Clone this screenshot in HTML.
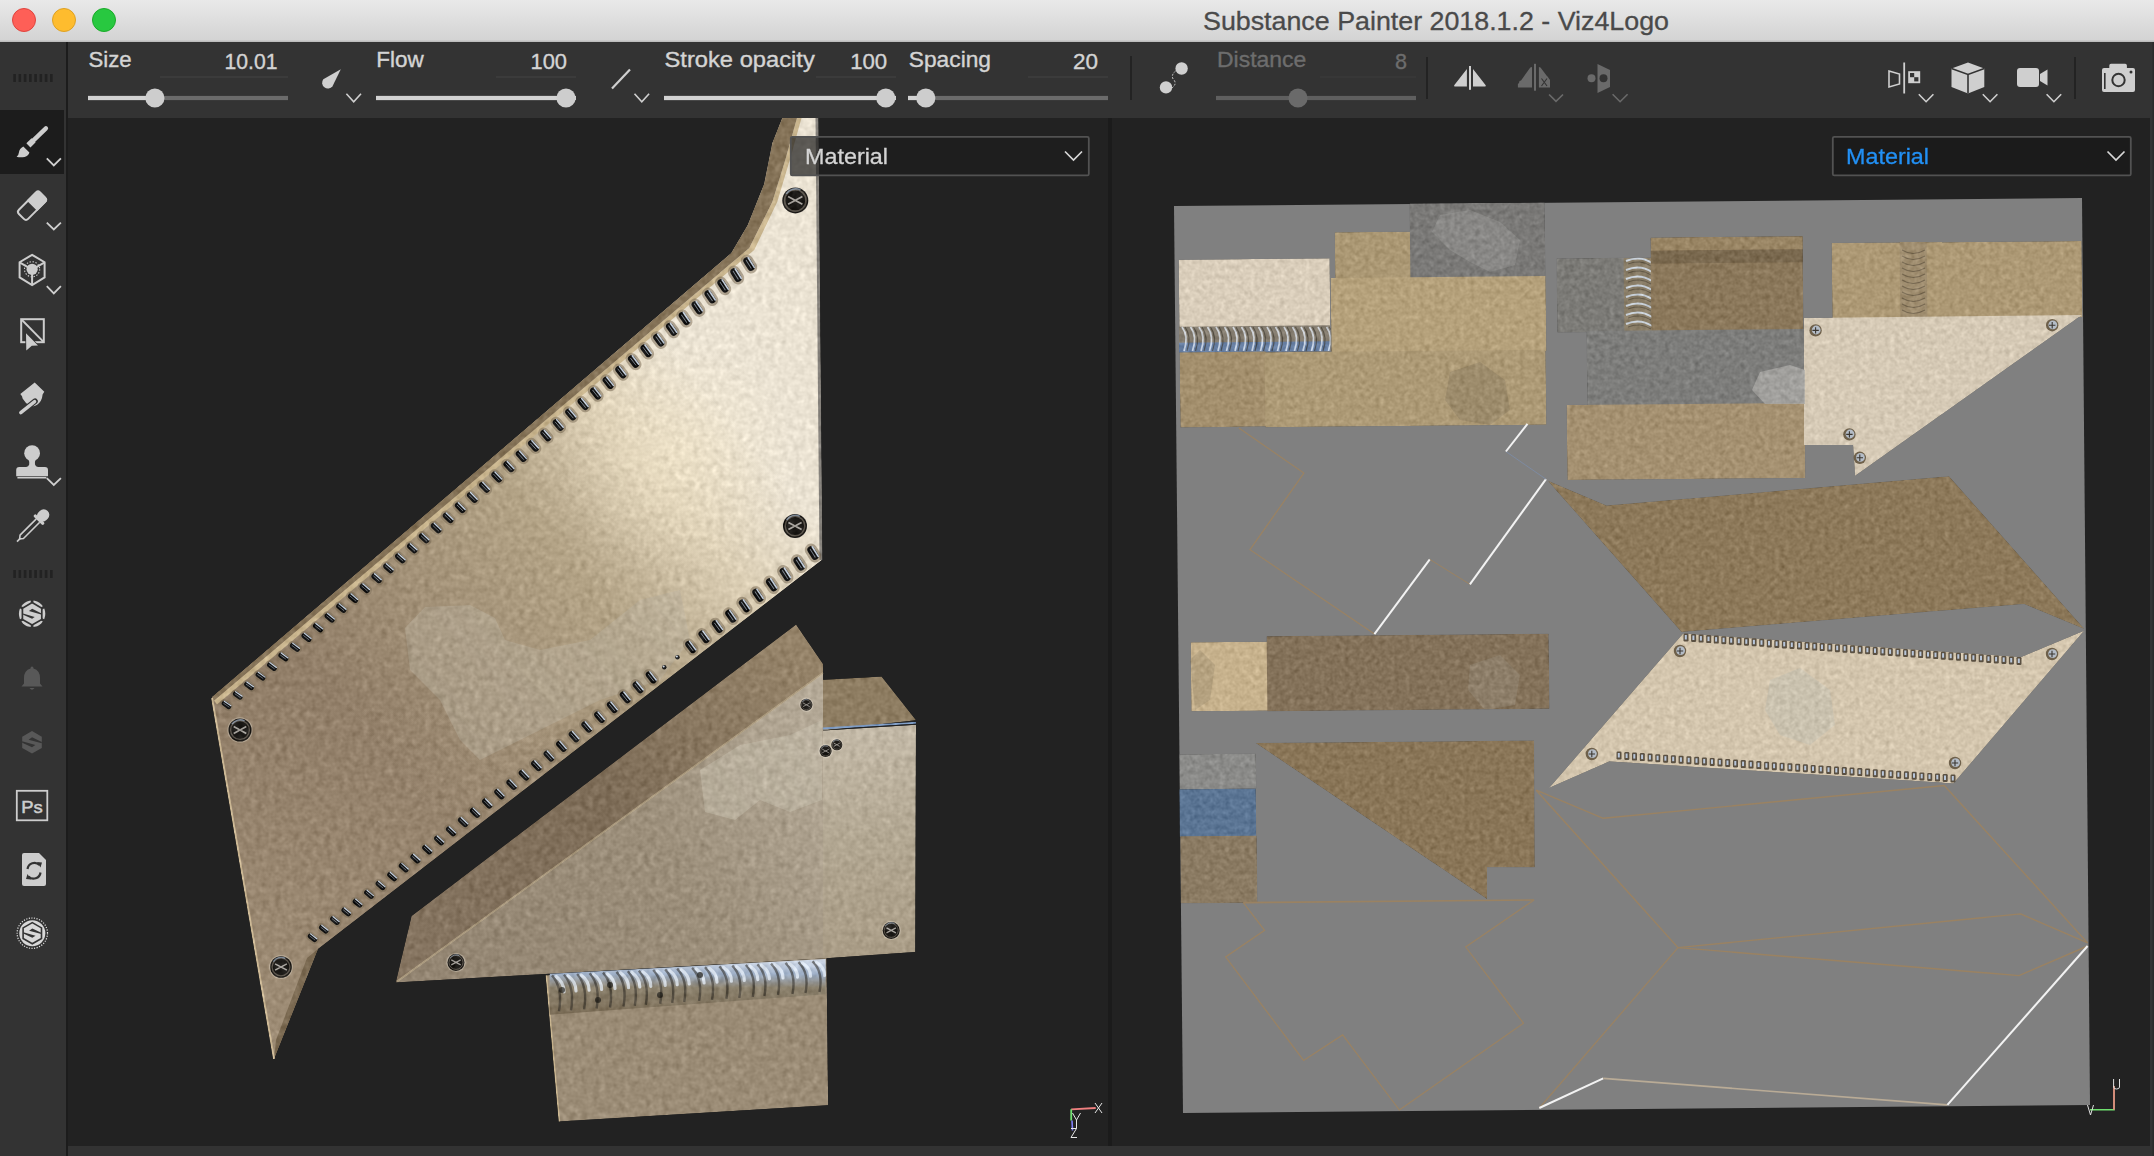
<!DOCTYPE html>
<html><head><meta charset="utf-8"><style>
html,body{margin:0;padding:0;width:2154px;height:1156px;overflow:hidden;background:#333;}
svg{display:block;font-family:"Liberation Sans", sans-serif;}
</style></head><body>
<svg width="2154" height="1156" viewBox="0 0 2154 1156">
<rect x="0" y="0" width="2154" height="1156" fill="#333333"/>
<defs><linearGradient id="tb" x1="0" y1="0" x2="0" y2="1"><stop offset="0" stop-color="#e9e9e9"/><stop offset="1" stop-color="#d3d3d3"/></linearGradient></defs>
<rect x="0" y="0" width="2154" height="41" fill="url(#tb)"/>
<rect x="0" y="40.5" width="2154" height="1.5" fill="#bdbdbd"/>
<circle cx="24" cy="20" r="11.5" fill="#fe5f57" stroke="#e0443e" stroke-width="1"/>
<circle cx="64" cy="20" r="11.5" fill="#febc2e" stroke="#dea123" stroke-width="1"/>
<circle cx="104" cy="20" r="11.5" fill="#28c840" stroke="#1aab29" stroke-width="1"/>
<text x="1203" y="30" font-size="26" fill="#4a4a4a" stroke="#4a4a4a" stroke-width="0.3" opacity="0.999" text-anchor="start" font-weight="normal" textLength="466" lengthAdjust="spacingAndGlyphs" >Substance Painter 2018.1.2 - Viz4Logo</text>
<rect x="0" y="42" width="2154" height="76" fill="#333333"/>
<rect x="0" y="118" width="66" height="1038" fill="#333333"/>
<rect x="66" y="42" width="2" height="1114" fill="#1c1c1c"/>
<rect x="0" y="110" width="64" height="64" fill="#1c1c1c"/>
<rect x="68" y="118" width="1040" height="1028" fill="#222222"/>
<rect x="1108" y="118" width="4" height="1028" fill="#1b1b1b"/>
<rect x="1112" y="118" width="1038" height="1028" fill="#222222"/>
<rect x="68" y="1146" width="2086" height="10" fill="#333333"/>
<rect x="2150" y="118" width="2.5" height="1038" fill="#333333"/><rect x="2152.5" y="42" width="1.5" height="1114" fill="#2a2a2a"/>
<rect x="13.30" y="74" width="2.6" height="8" fill="#222222"/>
<rect x="18.55" y="74" width="2.6" height="8" fill="#222222"/>
<rect x="23.80" y="74" width="2.6" height="8" fill="#222222"/>
<rect x="29.05" y="74" width="2.6" height="8" fill="#222222"/>
<rect x="34.30" y="74" width="2.6" height="8" fill="#222222"/>
<rect x="39.55" y="74" width="2.6" height="8" fill="#222222"/>
<rect x="44.80" y="74" width="2.6" height="8" fill="#222222"/>
<rect x="50.05" y="74" width="2.6" height="8" fill="#222222"/>
<text x="88.4" y="67.3" font-size="21.2" fill="#d4d4d4" stroke="#d4d4d4" stroke-width="0.35" text-anchor="start" opacity="0.999" textLength="43.2" lengthAdjust="spacingAndGlyphs">Size</text>
<text x="224.5" y="69.2" font-size="21.2" fill="#d4d4d4" stroke="#d4d4d4" stroke-width="0.35" text-anchor="start" opacity="0.999" textLength="53" lengthAdjust="spacingAndGlyphs">10.01</text>
<rect x="160" y="76.3" width="128" height="1.4" fill="#3f3f3f"/>
<rect x="88" y="95.9" width="200" height="4.2" fill="#6b6b6b"/>
<rect x="88" y="95.9" width="66.9" height="4.2" fill="#d2d2d2"/>
<circle cx="154.9" cy="98" r="9.6" fill="#cdcdcd"/>
<path d="M340.8,69.2 L332.5,86.2 A5.6,5.6 0 1 1 323.3,79.2 Z" fill="#cfcfcf"/>
<polyline points="346.4,93.8 353.7,101.8 361.0,93.8" fill="none" stroke="#cfcfcf" stroke-width="1.6" stroke-linejoin="miter"/>
<text x="376.3" y="67.3" font-size="21.2" fill="#d4d4d4" stroke="#d4d4d4" stroke-width="0.35" text-anchor="start" opacity="0.999" textLength="47.4" lengthAdjust="spacingAndGlyphs">Flow</text>
<text x="530.5" y="69.2" font-size="21.2" fill="#d4d4d4" stroke="#d4d4d4" stroke-width="0.35" text-anchor="start" opacity="0.999" textLength="36.5" lengthAdjust="spacingAndGlyphs">100</text>
<rect x="496" y="76.3" width="80" height="1.4" fill="#3f3f3f"/>
<rect x="376" y="95.9" width="200" height="4.2" fill="#6b6b6b"/>
<rect x="376" y="95.9" width="200" height="4.2" fill="#d2d2d2"/>
<circle cx="566" cy="98" r="9.6" fill="#cdcdcd"/>
<line x1="612" y1="88.5" x2="630" y2="69.5" stroke="#cfcfcf" stroke-width="2.2"/>
<polyline points="634.5,93.8 641.8,101.8 649.1,93.8" fill="none" stroke="#cfcfcf" stroke-width="1.6" stroke-linejoin="miter"/>
<text x="664.5" y="67.3" font-size="21.2" fill="#d4d4d4" stroke="#d4d4d4" stroke-width="0.35" text-anchor="start" opacity="0.999" textLength="150.3" lengthAdjust="spacingAndGlyphs">Stroke opacity</text>
<text x="850.2" y="69.2" font-size="21.2" fill="#d4d4d4" stroke="#d4d4d4" stroke-width="0.35" text-anchor="start" opacity="0.999" textLength="37" lengthAdjust="spacingAndGlyphs">100</text>
<rect x="816" y="76.3" width="80" height="1.4" fill="#3f3f3f"/>
<rect x="664" y="95.9" width="232" height="4.2" fill="#6b6b6b"/>
<rect x="664" y="95.9" width="232" height="4.2" fill="#d2d2d2"/>
<circle cx="885.8" cy="98" r="9.6" fill="#cdcdcd"/>
<text x="908.8" y="67.3" font-size="21.2" fill="#d4d4d4" stroke="#d4d4d4" stroke-width="0.35" text-anchor="start" opacity="0.999" textLength="82.2" lengthAdjust="spacingAndGlyphs">Spacing</text>
<text x="1073" y="69.2" font-size="21.2" fill="#d4d4d4" stroke="#d4d4d4" stroke-width="0.35" text-anchor="start" opacity="0.999" textLength="25" lengthAdjust="spacingAndGlyphs">20</text>
<rect x="1028" y="76.3" width="80" height="1.4" fill="#3f3f3f"/>
<rect x="908" y="95.9" width="200" height="4.2" fill="#6b6b6b"/>
<rect x="908" y="95.9" width="17.799999999999955" height="4.2" fill="#d2d2d2"/>
<circle cx="925.8" cy="98" r="9.6" fill="#cdcdcd"/>
<rect x="1130" y="56" width="2" height="44" fill="#232323"/>
<circle cx="1166" cy="87.4" r="6.2" fill="#cfcfcf"/><circle cx="1181.6" cy="68.5" r="6.2" fill="#cfcfcf"/>
<path d="M1175.5,71 Q1170,76 1174,80 Q1177,84 1172,88" fill="none" stroke="#cfcfcf" stroke-width="1" stroke-dasharray="2,1.6"/>
<text x="1217" y="67.3" font-size="21.2" fill="#6d6d6d" stroke="#6d6d6d" stroke-width="0.35" text-anchor="start" opacity="0.999" textLength="89.3" lengthAdjust="spacingAndGlyphs">Distance</text>
<text x="1395" y="69.2" font-size="21.2" fill="#6d6d6d" stroke="#6d6d6d" stroke-width="0.35" text-anchor="start" opacity="0.999" textLength="12" lengthAdjust="spacingAndGlyphs">8</text>
<rect x="1320" y="76.3" width="96" height="1.4" fill="#3a3a3a"/>
<rect x="1216" y="95.9" width="200" height="4.2" fill="#5f5f5f"/>
<circle cx="1298" cy="98" r="9.6" fill="#6a6a6a"/>
<rect x="1426" y="57" width="2" height="42" fill="#232323"/>
<path d="M1466.9,69 L1466.9,86.6 L1455.5,86.6 Q1453.2,86.6 1454.6,84.8 Z M1473,69 L1473,86.6 L1484.4,86.6 Q1486.7,86.6 1485.3,84.8 Z" fill="#cfcfcf"/>
<rect x="1469" y="66" width="2" height="23.8" fill="#cfcfcf"/>
<path d="M1517.9,87.5 L1517.9,84 L1519,83 L1519.5,81 L1521,80.5 L1530.3,67.5 L1532,67 L1532,87.5 Z" fill="#6a6a6a"/>
<rect x="1534" y="63.8" width="2" height="26.9" fill="#6a6a6a"/>
<path d="M1538.9,67 L1540.5,67.5 L1546.5,75.5 L1547.5,76.5 L1550,80 L1550,87.5 L1538.9,87.5 Z" fill="#6a6a6a"/>
<path d="M1541.5,78.5 L1547,86 M1547,78.5 L1541.5,86" stroke="#333" stroke-width="1.1"/>
<polyline points="1549.1,94.5 1556.0,101.4 1563.0,94.5" fill="none" stroke="#6a6a6a" stroke-width="1.7" stroke-linejoin="miter"/>
<circle cx="1591.5" cy="78.2" r="4" fill="#6a6a6a"/>
<path d="M1597.5,64 L1610,70 L1610,87 L1597.5,93 Z" fill="#6a6a6a"/>
<circle cx="1603.5" cy="78.2" r="4" fill="#333"/>
<polyline points="1612.6,94.2 1620.1,101.7 1627.6,94.2" fill="none" stroke="#6a6a6a" stroke-width="1.6" stroke-linejoin="miter"/>
<path d="M1889,71 L1899.5,74 L1899.5,84 L1889,87 Z" fill="none" stroke="#cfcfcf" stroke-width="1.6"/>
<rect x="1903.3" y="62.5" width="1.8" height="31" fill="#cfcfcf"/>
<rect x="1908.2" y="71.2" width="12" height="12" fill="#cfcfcf"/>
<rect x="1910" y="73" width="4.2" height="4.2" fill="#333"/><rect x="1914.2" y="77.2" width="4.2" height="4.2" fill="#333"/>
<polyline points="1918.8,94.2 1926.1,101.7 1933.4,94.2" fill="none" stroke="#cfcfcf" stroke-width="1.6" stroke-linejoin="miter"/>
<path d="M1968,62.5 L1984.3,68.5 L1984.3,87 L1968,93.5 L1951.5,87 L1951.5,68.5 Z" fill="#cfcfcf"/>
<path d="M1951.5,68.5 L1968,74.5 L1984.3,68.5 M1968,74.5 L1968,93.5" fill="none" stroke="#333" stroke-width="1.6"/>
<polyline points="1982.8,94.2 1990.1,101.7 1997.4,94.2" fill="none" stroke="#cfcfcf" stroke-width="1.6" stroke-linejoin="miter"/>
<rect x="2017" y="68" width="22" height="19" rx="3" fill="#cfcfcf"/><path d="M2040,74 L2047.5,69.5 L2047.5,85.5 L2040,81 Z" fill="#cfcfcf"/>
<polyline points="2046.6,94.2 2053.9,101.7 2061.2,94.2" fill="none" stroke="#cfcfcf" stroke-width="1.6" stroke-linejoin="miter"/>
<rect x="2074" y="57" width="2" height="42" fill="#232323"/>
<path d="M2102,70 Q2102,68 2104,68 L2109.3,68 L2109.3,65.5 Q2109.3,63.8 2111,63.8 L2125.2,63.8 Q2126.9,63.8 2126.9,65.5 L2126.9,68 L2133,68 Q2135,68 2135,70 L2135,90 Q2135,92 2133,92 L2104,92 Q2102,92 2102,90 Z" fill="#cfcfcf"/>
<circle cx="2118.5" cy="80" r="7.2" fill="#333"/><circle cx="2118.5" cy="80" r="5.2" fill="#cfcfcf"/><circle cx="2131" cy="72" r="1.5" fill="#333"/>
<rect x="2104" y="73" width="1.6" height="16" fill="#333"/>
<line x1="45.9" y1="128.3" x2="33.2" y2="140.6" stroke="#cdcdcd" stroke-width="4.4" stroke-linecap="round"/>
<line x1="33.6" y1="140.2" x2="28.4" y2="145.4" stroke="#cdcdcd" stroke-width="5.8"/>
<path d="M23.3,146.4 L29.4,152.4 Q28.6,155.8 24.6,156.9 Q20,157.8 16.6,156.7 Q18.7,155.2 18.9,152.4 Q19.3,148.4 23.3,146.4 Z" fill="#cdcdcd"/>
<polyline points="46.8,158.3 53.8,165.5 60.9,158.3" fill="none" stroke="#cfcfcf" stroke-width="1.8" stroke-linejoin="miter"/>
<g transform="translate(32,205.8) rotate(-45)"><rect x="-15" y="-6.5" width="30" height="13" rx="3" fill="none" stroke="#cdcdcd" stroke-width="2"/><path d="M0,-7.5 L12,-7.5 Q16,-7.5 16,-3.5 L16,3.5 Q16,7.5 12,7.5 L0,7.5 Z" fill="#cdcdcd"/></g>
<polyline points="46.8,222.6 53.8,229.4 60.9,222.6" fill="none" stroke="#cfcfcf" stroke-width="1.8" stroke-linejoin="miter"/>
<path d="M32.1,254.8 L44.6,262.2 L44.6,277.4 L32.1,285 L19.6,277.4 L19.6,262.2 Z" fill="none" stroke="#cdcdcd" stroke-width="2"/>
<path d="M20,262.6 L32.1,269.5 L44.2,262.6 M32.1,269.5 L32.1,284.6" fill="none" stroke="#cdcdcd" stroke-width="2"/>
<circle cx="32.1" cy="269.3" r="7.6" fill="none" stroke="#cdcdcd" stroke-width="1.1" stroke-dasharray="1.4,1.6"/>
<circle cx="32.1" cy="269.3" r="5.6" fill="#cdcdcd"/>
<polyline points="46.8,286.2 53.8,293.4 60.9,286.2" fill="none" stroke="#cfcfcf" stroke-width="1.8" stroke-linejoin="miter"/>
<rect x="21.2" y="319.2" width="22.6" height="23" fill="none" stroke="#cdcdcd" stroke-width="2"/>
<line x1="21.5" y1="319.5" x2="43.5" y2="341.8" stroke="#cdcdcd" stroke-width="1.9"/>
<path d="M26,333.3 L38,345.5 L31.8,345.8 L26.3,350.6 Z" fill="#cdcdcd" stroke="#333" stroke-width="1.6" paint-order="stroke"/>
<path d="M34.7,382.4 L44.3,391.8 L42.6,394.6 Q42,401.5 37.2,404.8 Q33.8,407 31.2,405.6 L26.2,403.2 L22.6,398.6 L22,396.2 L20.3,394 Z" fill="#cdcdcd"/>
<line x1="35" y1="401.2" x2="21" y2="412.4" stroke="#333" stroke-width="5.6" stroke-linecap="round"/>
<line x1="34.6" y1="401.6" x2="20.8" y2="412.6" stroke="#cdcdcd" stroke-width="3.4" stroke-linecap="round"/>
<circle cx="32.1" cy="453.2" r="7.9" fill="#cdcdcd"/>
<path d="M28.6,459.5 L35.6,459.5 Q34.6,462 35,464.5 Q35.6,466.8 38,467 L45,467 Q48,467 48,470 L48,476.2 L16.2,476.2 L16.2,470 Q16.2,467 19.2,467 L26.2,467 Q28.6,466.8 29.2,464.5 Q29.6,462 28.6,459.5 Z" fill="#cdcdcd"/>
<rect x="17.4" y="476.9" width="29" height="1.6" fill="#cdcdcd"/>
<polyline points="46.8,478.2 53.8,485.0 60.9,478.2" fill="none" stroke="#cfcfcf" stroke-width="1.8" stroke-linejoin="miter"/>
<g transform="translate(41.2,517.4) rotate(45)"><rect x="-5.6" y="-9.2" width="11.2" height="13" rx="5.6" fill="#cdcdcd"/><rect x="-6.8" y="1.5" width="13.6" height="3.2" rx="1.4" fill="#cdcdcd"/></g>
<g transform="translate(41.2,517.4) rotate(45)"><path d="M-2.4,4.5 L-2.4,27.5 L0,30.5 L2.4,27.5 L2.4,4.5" fill="none" stroke="#cdcdcd" stroke-width="1.6" stroke-linejoin="round"/><line x1="0" y1="30" x2="0" y2="34.2" stroke="#cdcdcd" stroke-width="1.6"/></g>
<rect x="13.30" y="570" width="2.6" height="8" fill="#222222"/>
<rect x="18.55" y="570" width="2.6" height="8" fill="#222222"/>
<rect x="23.80" y="570" width="2.6" height="8" fill="#222222"/>
<rect x="29.05" y="570" width="2.6" height="8" fill="#222222"/>
<rect x="34.30" y="570" width="2.6" height="8" fill="#222222"/>
<rect x="39.55" y="570" width="2.6" height="8" fill="#222222"/>
<rect x="44.80" y="570" width="2.6" height="8" fill="#222222"/>
<rect x="50.05" y="570" width="2.6" height="8" fill="#222222"/>
<g transform="translate(32.1,613.8)"><circle r="13.2" fill="#cdcdcd"/><path d="M0,-11.2 L9.7,-5.6 L9.7,5.6 L0,11.2 L-9.7,5.6 L-9.7,-5.6 Z" fill="none" stroke="#333" stroke-width="1.7"/><path d="M0,-11 L0,-14 M9.5,-5.5 L12.2,-7 M9.5,5.5 L12.2,7 M0,11 L0,14 M-9.5,5.5 L-12.2,7 M-9.5,-5.5 L-12.2,-7" stroke="#333" stroke-width="2.6"/><path d="M-3.2,-2.8 L0.1,-5 L9,-0.6 L9,0.6 Z" fill="#333"/><path d="M-9,-0.2 L-9,1 L0,5 L2.6,3.2 Z" fill="#333"/></g>
<path d="M32,666.5 Q33.5,666.5 33.5,668.5 Q40,670.5 40,678 L40,683.5 L42.5,686.5 L21.5,686.5 L24,683.5 L24,678 Q24,670.5 30.5,668.5 Q30.5,666.5 32,666.5 Z" fill="#585858"/>
<path d="M29.5,688 Q32,691.5 34.5,688 Z" fill="#585858"/>
<g transform="translate(32,742.3)"><path d="M0,-11.3 L9.8,-5.65 L9.8,5.65 L0,11.3 L-9.8,5.65 L-9.8,-5.65 Z" fill="#585858"/><path d="M-3.4,-2.6 L0,-5 L9.8,-0.4 L9.8,1 Z" fill="#333"/><path d="M-9.8,-1 L-9.8,0.4 L0,5 L3.4,2.6 Z" fill="#333"/></g>
<rect x="16.8" y="790.8" width="30.5" height="29.5" fill="none" stroke="#cdcdcd" stroke-width="1.8"/>
<text x="21.3" y="813" font-size="17" fill="#cdcdcd" stroke="#cdcdcd" stroke-width="0.5" opacity="0.999" textLength="21.5" lengthAdjust="spacingAndGlyphs">Ps</text>
<path d="M22,855 Q22,853 24,853 L39,853 L46,860 L46,884 Q46,886 44,886 L24,886 Q22,886 22,884 Z" fill="#cdcdcd"/>
<path d="M27.5,869 A7,7 0 0 1 39.5,865" fill="none" stroke="#333" stroke-width="2.2"/>
<path d="M40.5,872.5 A7,7 0 0 1 28.5,876.5" fill="none" stroke="#333" stroke-width="2.2"/>
<path d="M37,862 L42,862.5 L40.5,867.5 Z M31,879.5 L26,879 L27.5,874 Z" fill="#333"/>
<circle cx="32.3" cy="933.2" r="15.2" fill="none" stroke="#e0e0e0" stroke-width="1.2" stroke-dasharray="1.2,1.4"/>
<circle cx="32.3" cy="933.2" r="13" fill="#d8d8d8"/>
<g transform="translate(32.3,933.2)"><path d="M0,-10.6 L9.2,-5.3 L9.2,5.3 L0,10.6 L-9.2,5.3 L-9.2,-5.3 Z" fill="none" stroke="#333" stroke-width="1.6"/><path d="M-3.2,-2.5 L0,-4.6 L9,-0.4 L9,0.9 Z" fill="#333"/><path d="M-9,-0.9 L-9,0.4 L0,4.6 L3.2,2.5 Z" fill="#333"/></g>
<polygon points="1174.0,206.0 2082.0,198.0 2090.0,1105.0 1183.0,1113.0" fill="#808080" />
<filter id="mottleUV" filterUnits="userSpaceOnUse" x="1112" y="118" width="1038" height="1028" color-interpolation-filters="sRGB"><feTurbulence type="fractalNoise" baseFrequency="0.2" numOctaves="2" seed="11" result="t"/><feColorMatrix in="t" type="matrix" values="0.33 0.33 0.33 0 0  0.33 0.33 0.33 0 0  0.33 0.33 0.33 0 0  0 0 0 0 1" result="g"/><feComposite in="SourceGraphic" in2="g" operator="arithmetic" k1="0" k2="1" k3="0.3" k4="-0.15" result="c"/><feComposite in="c" in2="SourceGraphic" operator="in"/></filter>
<g filter="url(#mottleUV)">
<polygon points="1178.7,259.7 1329.7,258.3 1330.3,326.3 1179.3,327.7" fill="#dacebb" />
<polygon points="1178.9,326.7 1329.9,325.3 1330.1,351.3 1179.1,352.7" fill="#857d70" />
<polygon points="1179.0,342.7 1330.0,341.3 1330.0,351.3 1179.0,352.7" fill="#5f80b0" opacity="0.8"/>
<path d="M1182,327 Q1189,336 1184,351" fill="none" stroke="#e6eef8" stroke-width="1.8" opacity="0.75"/>
<path d="M1185,327 Q1192,337 1187,351" fill="none" stroke="#3a352c" stroke-width="1.2" opacity="0.6"/>
<path d="M1190.5,327 Q1197.5,336 1192.5,351" fill="none" stroke="#e6eef8" stroke-width="1.8" opacity="0.75"/>
<path d="M1193.5,327 Q1200.5,337 1195.5,351" fill="none" stroke="#3a352c" stroke-width="1.2" opacity="0.6"/>
<path d="M1199.0,327 Q1206.0,336 1201.0,351" fill="none" stroke="#e6eef8" stroke-width="1.8" opacity="0.75"/>
<path d="M1202.0,327 Q1209.0,337 1204.0,351" fill="none" stroke="#3a352c" stroke-width="1.2" opacity="0.6"/>
<path d="M1207.5,327 Q1214.5,336 1209.5,351" fill="none" stroke="#e6eef8" stroke-width="1.8" opacity="0.75"/>
<path d="M1210.5,327 Q1217.5,337 1212.5,351" fill="none" stroke="#3a352c" stroke-width="1.2" opacity="0.6"/>
<path d="M1216.0,327 Q1223.0,336 1218.0,351" fill="none" stroke="#e6eef8" stroke-width="1.8" opacity="0.75"/>
<path d="M1219.0,327 Q1226.0,337 1221.0,351" fill="none" stroke="#3a352c" stroke-width="1.2" opacity="0.6"/>
<path d="M1224.5,327 Q1231.5,336 1226.5,351" fill="none" stroke="#e6eef8" stroke-width="1.8" opacity="0.75"/>
<path d="M1227.5,327 Q1234.5,337 1229.5,351" fill="none" stroke="#3a352c" stroke-width="1.2" opacity="0.6"/>
<path d="M1233.0,327 Q1240.0,336 1235.0,351" fill="none" stroke="#e6eef8" stroke-width="1.8" opacity="0.75"/>
<path d="M1236.0,327 Q1243.0,337 1238.0,351" fill="none" stroke="#3a352c" stroke-width="1.2" opacity="0.6"/>
<path d="M1241.5,327 Q1248.5,336 1243.5,351" fill="none" stroke="#e6eef8" stroke-width="1.8" opacity="0.75"/>
<path d="M1244.5,327 Q1251.5,337 1246.5,351" fill="none" stroke="#3a352c" stroke-width="1.2" opacity="0.6"/>
<path d="M1250.0,327 Q1257.0,336 1252.0,351" fill="none" stroke="#e6eef8" stroke-width="1.8" opacity="0.75"/>
<path d="M1253.0,327 Q1260.0,337 1255.0,351" fill="none" stroke="#3a352c" stroke-width="1.2" opacity="0.6"/>
<path d="M1258.5,327 Q1265.5,336 1260.5,351" fill="none" stroke="#e6eef8" stroke-width="1.8" opacity="0.75"/>
<path d="M1261.5,327 Q1268.5,337 1263.5,351" fill="none" stroke="#3a352c" stroke-width="1.2" opacity="0.6"/>
<path d="M1267.0,327 Q1274.0,336 1269.0,351" fill="none" stroke="#e6eef8" stroke-width="1.8" opacity="0.75"/>
<path d="M1270.0,327 Q1277.0,337 1272.0,351" fill="none" stroke="#3a352c" stroke-width="1.2" opacity="0.6"/>
<path d="M1275.5,327 Q1282.5,336 1277.5,351" fill="none" stroke="#e6eef8" stroke-width="1.8" opacity="0.75"/>
<path d="M1278.5,327 Q1285.5,337 1280.5,351" fill="none" stroke="#3a352c" stroke-width="1.2" opacity="0.6"/>
<path d="M1284.0,327 Q1291.0,336 1286.0,351" fill="none" stroke="#e6eef8" stroke-width="1.8" opacity="0.75"/>
<path d="M1287.0,327 Q1294.0,337 1289.0,351" fill="none" stroke="#3a352c" stroke-width="1.2" opacity="0.6"/>
<path d="M1292.5,327 Q1299.5,336 1294.5,351" fill="none" stroke="#e6eef8" stroke-width="1.8" opacity="0.75"/>
<path d="M1295.5,327 Q1302.5,337 1297.5,351" fill="none" stroke="#3a352c" stroke-width="1.2" opacity="0.6"/>
<path d="M1301.0,327 Q1308.0,336 1303.0,351" fill="none" stroke="#e6eef8" stroke-width="1.8" opacity="0.75"/>
<path d="M1304.0,327 Q1311.0,337 1306.0,351" fill="none" stroke="#3a352c" stroke-width="1.2" opacity="0.6"/>
<path d="M1309.5,327 Q1316.5,336 1311.5,351" fill="none" stroke="#e6eef8" stroke-width="1.8" opacity="0.75"/>
<path d="M1312.5,327 Q1319.5,337 1314.5,351" fill="none" stroke="#3a352c" stroke-width="1.2" opacity="0.6"/>
<path d="M1318.0,327 Q1325.0,336 1320.0,351" fill="none" stroke="#e6eef8" stroke-width="1.8" opacity="0.75"/>
<path d="M1321.0,327 Q1328.0,337 1323.0,351" fill="none" stroke="#3a352c" stroke-width="1.2" opacity="0.6"/>
<path d="M1326.5,327 Q1333.5,336 1328.5,351" fill="none" stroke="#e6eef8" stroke-width="1.8" opacity="0.75"/>
<path d="M1329.5,327 Q1336.5,337 1331.5,351" fill="none" stroke="#3a352c" stroke-width="1.2" opacity="0.6"/>
<polygon points="1334.8,232.3 1410.8,231.7 1411.2,278.7 1335.2,279.3" fill="#ab9874" />
<polygon points="1409.6,203.6 1544.6,202.4 1545.4,277.4 1410.4,278.6" fill="#7a7977" />
<polygon points="1330.6,277.9 1545.6,276.1 1546.4,351.1 1331.4,352.9" fill="#b5a17b" />
<polygon points="1179.6,352.4 1265.6,351.6 1266.4,426.6 1180.4,427.4" fill="#a38f6d" />
<polygon points="1264.6,352.2 1545.6,349.8 1546.4,424.8 1265.4,427.2" fill="#ad9a76" />
<polygon points="1556.6,258.4 1651.6,257.6 1652.4,331.6 1557.4,332.4" fill="#7c7b77" />
<polygon points="1623.6,258.1 1651.6,257.9 1652.4,331.9 1624.4,332.1" fill="#8a7e68" />
<path d="M1626,261 Q1640,255 1652,263" fill="none" stroke="#d8e6f6" stroke-width="2" opacity="0.8"/>
<path d="M1628,264 Q1640,259 1651,266" fill="none" stroke="#4a4236" stroke-width="1" opacity="0.6"/>
<path d="M1626,270 Q1640,264 1652,272" fill="none" stroke="#d8e6f6" stroke-width="2" opacity="0.8"/>
<path d="M1628,273 Q1640,268 1651,275" fill="none" stroke="#4a4236" stroke-width="1" opacity="0.6"/>
<path d="M1626,279 Q1640,273 1652,281" fill="none" stroke="#d8e6f6" stroke-width="2" opacity="0.8"/>
<path d="M1628,282 Q1640,277 1651,284" fill="none" stroke="#4a4236" stroke-width="1" opacity="0.6"/>
<path d="M1626,288 Q1640,282 1652,290" fill="none" stroke="#d8e6f6" stroke-width="2" opacity="0.8"/>
<path d="M1628,291 Q1640,286 1651,293" fill="none" stroke="#4a4236" stroke-width="1" opacity="0.6"/>
<path d="M1626,297 Q1640,291 1652,299" fill="none" stroke="#d8e6f6" stroke-width="2" opacity="0.8"/>
<path d="M1628,300 Q1640,295 1651,302" fill="none" stroke="#4a4236" stroke-width="1" opacity="0.6"/>
<path d="M1626,306 Q1640,300 1652,308" fill="none" stroke="#d8e6f6" stroke-width="2" opacity="0.8"/>
<path d="M1628,309 Q1640,304 1651,311" fill="none" stroke="#4a4236" stroke-width="1" opacity="0.6"/>
<path d="M1626,315 Q1640,309 1652,317" fill="none" stroke="#d8e6f6" stroke-width="2" opacity="0.8"/>
<path d="M1628,318 Q1640,313 1651,320" fill="none" stroke="#4a4236" stroke-width="1" opacity="0.6"/>
<path d="M1626,324 Q1640,318 1652,326" fill="none" stroke="#d8e6f6" stroke-width="2" opacity="0.8"/>
<path d="M1628,327 Q1640,322 1651,329" fill="none" stroke="#4a4236" stroke-width="1" opacity="0.6"/>
<polygon points="1650.5,237.7 1802.5,236.3 1803.5,330.3 1651.5,331.7" fill="#8b785b" />
<polygon points="1650.9,237.7 1802.9,236.3 1803.1,249.3 1651.1,250.7" fill="#a08a68" opacity="0.7"/>
<polygon points="1650.9,250.7 1802.9,249.3 1803.1,262.3 1651.1,263.7" fill="#6e5c45" opacity="0.55"/>
<polygon points="1586.6,331.0 1804.6,329.0 1805.4,404.0 1587.4,406.0" fill="#7d7d7b" />
<polygon points="1566.6,405.0 1804.6,403.0 1805.4,478.0 1567.4,480.0" fill="#a59171" />
<polygon points="1831.6,243.1 2081.6,240.9 2082.4,316.9 1832.4,319.1" fill="#ad9975" />
<polygon points="1899.6,242.1 1926.6,241.9 1927.4,317.9 1900.4,318.1" fill="#a08e70" />
<path d="M1902,250 Q1913,257 1925,250" fill="none" stroke="#5a4e3c" stroke-width="1.1" opacity="0.6"/>
<path d="M1902,256 Q1913,263 1925,256" fill="none" stroke="#5a4e3c" stroke-width="1.1" opacity="0.6"/>
<path d="M1902,262 Q1913,269 1925,262" fill="none" stroke="#5a4e3c" stroke-width="1.1" opacity="0.6"/>
<path d="M1902,268 Q1913,275 1925,268" fill="none" stroke="#5a4e3c" stroke-width="1.1" opacity="0.6"/>
<path d="M1902,274 Q1913,281 1925,274" fill="none" stroke="#5a4e3c" stroke-width="1.1" opacity="0.6"/>
<path d="M1902,280 Q1913,287 1925,280" fill="none" stroke="#5a4e3c" stroke-width="1.1" opacity="0.6"/>
<path d="M1902,286 Q1913,293 1925,286" fill="none" stroke="#5a4e3c" stroke-width="1.1" opacity="0.6"/>
<path d="M1902,292 Q1913,299 1925,292" fill="none" stroke="#5a4e3c" stroke-width="1.1" opacity="0.6"/>
<path d="M1902,298 Q1913,305 1925,298" fill="none" stroke="#5a4e3c" stroke-width="1.1" opacity="0.6"/>
<path d="M1902,304 Q1913,311 1925,304" fill="none" stroke="#5a4e3c" stroke-width="1.1" opacity="0.6"/>
<path d="M1902,310 Q1913,317 1925,310" fill="none" stroke="#5a4e3c" stroke-width="1.1" opacity="0.6"/>
<polygon points="1804.0,318.0 2082.0,315.0 1855.0,476.0 1853.0,445.0 1804.0,445.0" fill="#d6cab6" />
<polygon points="1547.6,480.6 1606.5,505.6 1949.0,476.2 2084.4,629.0 2024.0,604.0 1681.5,632.0" fill="#8d795a" />
<polygon points="1683.0,633.5 2021.0,657.0 2084.4,630.6 1953.5,783.5 1609.4,761.5 1549.0,788.0" fill="#d4c6ae" />
<polygon points="1190.7,642.3 1267.7,641.7 1268.3,710.7 1191.3,711.3" fill="#c7b28d" />
<polygon points="1266.6,636.2 1548.6,633.8 1549.4,708.8 1267.4,711.2" fill="#84725a" />
<polygon points="1179.3,754.3 1255.8,753.7 1256.2,788.7 1179.7,789.3" fill="#8b8b89" />
<polygon points="1179.3,789.3 1255.8,788.7 1256.2,836.7 1179.7,837.3" fill="#5b7594" />
<polygon points="1180.2,836.3 1256.7,835.7 1257.3,902.7 1180.8,903.3" fill="#8b7b63" />
<polygon points="1255.7,743.0 1534.0,740.6 1534.8,867.2 1487.0,867.2 1487.0,899.0" fill="#8a7658" />
<polygon points="1440.0,215.0 1470.0,210.0 1500.0,222.0 1520.0,240.0 1515.0,265.0 1490.0,272.0 1470.0,262.0 1450.0,250.0 1432.0,232.0" fill="#9c9c98" opacity="0.45"/>
<polygon points="1450.0,372.0 1480.0,362.0 1505.0,380.0 1510.0,410.0 1490.0,425.0 1460.0,420.0 1445.0,400.0" fill="#8e7e62" opacity="0.5"/>
<polygon points="1760.0,372.0 1790.0,365.0 1805.0,370.0 1805.0,404.0 1765.0,404.0 1752.0,390.0" fill="#aaa9a6" opacity="0.8"/>
<polygon points="1770.0,680.0 1800.0,668.0 1830.0,690.0 1835.0,725.0 1810.0,745.0 1780.0,735.0 1765.0,710.0" fill="#bcbcb2" opacity="0.4"/>
<polygon points="1470.0,665.0 1500.0,655.0 1520.0,675.0 1515.0,705.0 1485.0,710.0 1468.0,690.0" fill="#9a9080" opacity="0.4"/>
<polygon points="1190.0,660.0 1200.0,650.0 1215.0,665.0 1210.0,700.0 1195.0,710.0" fill="#a89878" opacity="0.6"/>
</g>
<rect x="1683.5" y="633.5" width="5" height="8" rx="1.2" fill="#5a5042"/><rect x="1684.8" y="635.0" width="2" height="4.5" fill="#b8c6da"/><rect x="1691.1" y="634.0" width="5" height="8" rx="1.2" fill="#5a5042"/><rect x="1692.4" y="635.5" width="2" height="4.5" fill="#b8c6da"/><rect x="1698.6" y="634.6" width="5" height="8" rx="1.2" fill="#5a5042"/><rect x="1699.9" y="636.1" width="2" height="4.5" fill="#b8c6da"/><rect x="1706.2" y="635.1" width="5" height="8" rx="1.2" fill="#5a5042"/><rect x="1707.5" y="636.6" width="2" height="4.5" fill="#b8c6da"/><rect x="1713.8" y="635.6" width="5" height="8" rx="1.2" fill="#5a5042"/><rect x="1715.1" y="637.1" width="2" height="4.5" fill="#b8c6da"/><rect x="1721.3" y="636.2" width="5" height="8" rx="1.2" fill="#5a5042"/><rect x="1722.6" y="637.7" width="2" height="4.5" fill="#b8c6da"/><rect x="1728.9" y="636.7" width="5" height="8" rx="1.2" fill="#5a5042"/><rect x="1730.2" y="638.2" width="2" height="4.5" fill="#b8c6da"/><rect x="1736.5" y="637.2" width="5" height="8" rx="1.2" fill="#5a5042"/><rect x="1737.8" y="638.7" width="2" height="4.5" fill="#b8c6da"/><rect x="1744.0" y="637.8" width="5" height="8" rx="1.2" fill="#5a5042"/><rect x="1745.3" y="639.3" width="2" height="4.5" fill="#b8c6da"/><rect x="1751.6" y="638.3" width="5" height="8" rx="1.2" fill="#5a5042"/><rect x="1752.9" y="639.8" width="2" height="4.5" fill="#b8c6da"/><rect x="1759.2" y="638.8" width="5" height="8" rx="1.2" fill="#5a5042"/><rect x="1760.5" y="640.3" width="2" height="4.5" fill="#b8c6da"/><rect x="1766.8" y="639.4" width="5" height="8" rx="1.2" fill="#5a5042"/><rect x="1768.0" y="640.9" width="2" height="4.5" fill="#b8c6da"/><rect x="1774.3" y="639.9" width="5" height="8" rx="1.2" fill="#5a5042"/><rect x="1775.6" y="641.4" width="2" height="4.5" fill="#b8c6da"/><rect x="1781.9" y="640.4" width="5" height="8" rx="1.2" fill="#5a5042"/><rect x="1783.2" y="641.9" width="2" height="4.5" fill="#b8c6da"/><rect x="1789.5" y="641.0" width="5" height="8" rx="1.2" fill="#5a5042"/><rect x="1790.8" y="642.5" width="2" height="4.5" fill="#b8c6da"/><rect x="1797.0" y="641.5" width="5" height="8" rx="1.2" fill="#5a5042"/><rect x="1798.3" y="643.0" width="2" height="4.5" fill="#b8c6da"/><rect x="1804.6" y="642.0" width="5" height="8" rx="1.2" fill="#5a5042"/><rect x="1805.9" y="643.5" width="2" height="4.5" fill="#b8c6da"/><rect x="1812.2" y="642.6" width="5" height="8" rx="1.2" fill="#5a5042"/><rect x="1813.5" y="644.1" width="2" height="4.5" fill="#b8c6da"/><rect x="1819.7" y="643.1" width="5" height="8" rx="1.2" fill="#5a5042"/><rect x="1821.0" y="644.6" width="2" height="4.5" fill="#b8c6da"/><rect x="1827.3" y="643.6" width="5" height="8" rx="1.2" fill="#5a5042"/><rect x="1828.6" y="645.1" width="2" height="4.5" fill="#b8c6da"/><rect x="1834.9" y="644.2" width="5" height="8" rx="1.2" fill="#5a5042"/><rect x="1836.2" y="645.7" width="2" height="4.5" fill="#b8c6da"/><rect x="1842.4" y="644.7" width="5" height="8" rx="1.2" fill="#5a5042"/><rect x="1843.7" y="646.2" width="2" height="4.5" fill="#b8c6da"/><rect x="1850.0" y="645.2" width="5" height="8" rx="1.2" fill="#5a5042"/><rect x="1851.3" y="646.8" width="2" height="4.5" fill="#b8c6da"/><rect x="1857.6" y="645.8" width="5" height="8" rx="1.2" fill="#5a5042"/><rect x="1858.9" y="647.3" width="2" height="4.5" fill="#b8c6da"/><rect x="1865.1" y="646.3" width="5" height="8" rx="1.2" fill="#5a5042"/><rect x="1866.4" y="647.8" width="2" height="4.5" fill="#b8c6da"/><rect x="1872.7" y="646.9" width="5" height="8" rx="1.2" fill="#5a5042"/><rect x="1874.0" y="648.4" width="2" height="4.5" fill="#b8c6da"/><rect x="1880.3" y="647.4" width="5" height="8" rx="1.2" fill="#5a5042"/><rect x="1881.6" y="648.9" width="2" height="4.5" fill="#b8c6da"/><rect x="1887.8" y="647.9" width="5" height="8" rx="1.2" fill="#5a5042"/><rect x="1889.1" y="649.4" width="2" height="4.5" fill="#b8c6da"/><rect x="1895.4" y="648.5" width="5" height="8" rx="1.2" fill="#5a5042"/><rect x="1896.7" y="650.0" width="2" height="4.5" fill="#b8c6da"/><rect x="1903.0" y="649.0" width="5" height="8" rx="1.2" fill="#5a5042"/><rect x="1904.3" y="650.5" width="2" height="4.5" fill="#b8c6da"/><rect x="1910.5" y="649.5" width="5" height="8" rx="1.2" fill="#5a5042"/><rect x="1911.8" y="651.0" width="2" height="4.5" fill="#b8c6da"/><rect x="1918.1" y="650.1" width="5" height="8" rx="1.2" fill="#5a5042"/><rect x="1919.4" y="651.6" width="2" height="4.5" fill="#b8c6da"/><rect x="1925.7" y="650.6" width="5" height="8" rx="1.2" fill="#5a5042"/><rect x="1927.0" y="652.1" width="2" height="4.5" fill="#b8c6da"/><rect x="1933.2" y="651.1" width="5" height="8" rx="1.2" fill="#5a5042"/><rect x="1934.5" y="652.6" width="2" height="4.5" fill="#b8c6da"/><rect x="1940.8" y="651.7" width="5" height="8" rx="1.2" fill="#5a5042"/><rect x="1942.1" y="653.2" width="2" height="4.5" fill="#b8c6da"/><rect x="1948.4" y="652.2" width="5" height="8" rx="1.2" fill="#5a5042"/><rect x="1949.7" y="653.7" width="2" height="4.5" fill="#b8c6da"/><rect x="1956.0" y="652.7" width="5" height="8" rx="1.2" fill="#5a5042"/><rect x="1957.3" y="654.2" width="2" height="4.5" fill="#b8c6da"/><rect x="1963.5" y="653.3" width="5" height="8" rx="1.2" fill="#5a5042"/><rect x="1964.8" y="654.8" width="2" height="4.5" fill="#b8c6da"/><rect x="1971.1" y="653.8" width="5" height="8" rx="1.2" fill="#5a5042"/><rect x="1972.4" y="655.3" width="2" height="4.5" fill="#b8c6da"/><rect x="1978.7" y="654.3" width="5" height="8" rx="1.2" fill="#5a5042"/><rect x="1980.0" y="655.8" width="2" height="4.5" fill="#b8c6da"/><rect x="1986.2" y="654.9" width="5" height="8" rx="1.2" fill="#5a5042"/><rect x="1987.5" y="656.4" width="2" height="4.5" fill="#b8c6da"/><rect x="1993.8" y="655.4" width="5" height="8" rx="1.2" fill="#5a5042"/><rect x="1995.1" y="656.9" width="2" height="4.5" fill="#b8c6da"/><rect x="2001.4" y="655.9" width="5" height="8" rx="1.2" fill="#5a5042"/><rect x="2002.7" y="657.4" width="2" height="4.5" fill="#b8c6da"/><rect x="2008.9" y="656.5" width="5" height="8" rx="1.2" fill="#5a5042"/><rect x="2010.2" y="658.0" width="2" height="4.5" fill="#b8c6da"/><rect x="2016.5" y="657.0" width="5" height="8" rx="1.2" fill="#5a5042"/><rect x="2017.8" y="658.5" width="2" height="4.5" fill="#b8c6da"/>
<rect x="1616.5" y="751.5" width="5" height="8" rx="1.2" fill="#5a5042"/><rect x="1617.8" y="753.0" width="2" height="4.5" fill="#b8c6da"/><rect x="1624.3" y="752.0" width="5" height="8" rx="1.2" fill="#5a5042"/><rect x="1625.6" y="753.5" width="2" height="4.5" fill="#b8c6da"/><rect x="1632.0" y="752.6" width="5" height="8" rx="1.2" fill="#5a5042"/><rect x="1633.3" y="754.1" width="2" height="4.5" fill="#b8c6da"/><rect x="1639.8" y="753.1" width="5" height="8" rx="1.2" fill="#5a5042"/><rect x="1641.1" y="754.6" width="2" height="4.5" fill="#b8c6da"/><rect x="1647.6" y="753.6" width="5" height="8" rx="1.2" fill="#5a5042"/><rect x="1648.9" y="755.1" width="2" height="4.5" fill="#b8c6da"/><rect x="1655.3" y="754.2" width="5" height="8" rx="1.2" fill="#5a5042"/><rect x="1656.6" y="755.7" width="2" height="4.5" fill="#b8c6da"/><rect x="1663.1" y="754.7" width="5" height="8" rx="1.2" fill="#5a5042"/><rect x="1664.4" y="756.2" width="2" height="4.5" fill="#b8c6da"/><rect x="1670.9" y="755.2" width="5" height="8" rx="1.2" fill="#5a5042"/><rect x="1672.2" y="756.7" width="2" height="4.5" fill="#b8c6da"/><rect x="1678.6" y="755.8" width="5" height="8" rx="1.2" fill="#5a5042"/><rect x="1679.9" y="757.3" width="2" height="4.5" fill="#b8c6da"/><rect x="1686.4" y="756.3" width="5" height="8" rx="1.2" fill="#5a5042"/><rect x="1687.7" y="757.8" width="2" height="4.5" fill="#b8c6da"/><rect x="1694.2" y="756.8" width="5" height="8" rx="1.2" fill="#5a5042"/><rect x="1695.5" y="758.3" width="2" height="4.5" fill="#b8c6da"/><rect x="1701.9" y="757.4" width="5" height="8" rx="1.2" fill="#5a5042"/><rect x="1703.2" y="758.9" width="2" height="4.5" fill="#b8c6da"/><rect x="1709.7" y="757.9" width="5" height="8" rx="1.2" fill="#5a5042"/><rect x="1711.0" y="759.4" width="2" height="4.5" fill="#b8c6da"/><rect x="1717.5" y="758.5" width="5" height="8" rx="1.2" fill="#5a5042"/><rect x="1718.8" y="760.0" width="2" height="4.5" fill="#b8c6da"/><rect x="1725.2" y="759.0" width="5" height="8" rx="1.2" fill="#5a5042"/><rect x="1726.5" y="760.5" width="2" height="4.5" fill="#b8c6da"/><rect x="1733.0" y="759.5" width="5" height="8" rx="1.2" fill="#5a5042"/><rect x="1734.3" y="761.0" width="2" height="4.5" fill="#b8c6da"/><rect x="1740.8" y="760.1" width="5" height="8" rx="1.2" fill="#5a5042"/><rect x="1742.1" y="761.6" width="2" height="4.5" fill="#b8c6da"/><rect x="1748.5" y="760.6" width="5" height="8" rx="1.2" fill="#5a5042"/><rect x="1749.8" y="762.1" width="2" height="4.5" fill="#b8c6da"/><rect x="1756.3" y="761.1" width="5" height="8" rx="1.2" fill="#5a5042"/><rect x="1757.6" y="762.6" width="2" height="4.5" fill="#b8c6da"/><rect x="1764.1" y="761.7" width="5" height="8" rx="1.2" fill="#5a5042"/><rect x="1765.4" y="763.2" width="2" height="4.5" fill="#b8c6da"/><rect x="1771.8" y="762.2" width="5" height="8" rx="1.2" fill="#5a5042"/><rect x="1773.1" y="763.7" width="2" height="4.5" fill="#b8c6da"/><rect x="1779.6" y="762.7" width="5" height="8" rx="1.2" fill="#5a5042"/><rect x="1780.9" y="764.2" width="2" height="4.5" fill="#b8c6da"/><rect x="1787.4" y="763.3" width="5" height="8" rx="1.2" fill="#5a5042"/><rect x="1788.7" y="764.8" width="2" height="4.5" fill="#b8c6da"/><rect x="1795.2" y="763.8" width="5" height="8" rx="1.2" fill="#5a5042"/><rect x="1796.5" y="765.3" width="2" height="4.5" fill="#b8c6da"/><rect x="1802.9" y="764.3" width="5" height="8" rx="1.2" fill="#5a5042"/><rect x="1804.2" y="765.8" width="2" height="4.5" fill="#b8c6da"/><rect x="1810.7" y="764.9" width="5" height="8" rx="1.2" fill="#5a5042"/><rect x="1812.0" y="766.4" width="2" height="4.5" fill="#b8c6da"/><rect x="1818.5" y="765.4" width="5" height="8" rx="1.2" fill="#5a5042"/><rect x="1819.8" y="766.9" width="2" height="4.5" fill="#b8c6da"/><rect x="1826.2" y="765.9" width="5" height="8" rx="1.2" fill="#5a5042"/><rect x="1827.5" y="767.4" width="2" height="4.5" fill="#b8c6da"/><rect x="1834.0" y="766.5" width="5" height="8" rx="1.2" fill="#5a5042"/><rect x="1835.3" y="768.0" width="2" height="4.5" fill="#b8c6da"/><rect x="1841.8" y="767.0" width="5" height="8" rx="1.2" fill="#5a5042"/><rect x="1843.1" y="768.5" width="2" height="4.5" fill="#b8c6da"/><rect x="1849.5" y="767.5" width="5" height="8" rx="1.2" fill="#5a5042"/><rect x="1850.8" y="769.0" width="2" height="4.5" fill="#b8c6da"/><rect x="1857.3" y="768.1" width="5" height="8" rx="1.2" fill="#5a5042"/><rect x="1858.6" y="769.6" width="2" height="4.5" fill="#b8c6da"/><rect x="1865.1" y="768.6" width="5" height="8" rx="1.2" fill="#5a5042"/><rect x="1866.4" y="770.1" width="2" height="4.5" fill="#b8c6da"/><rect x="1872.8" y="769.2" width="5" height="8" rx="1.2" fill="#5a5042"/><rect x="1874.1" y="770.7" width="2" height="4.5" fill="#b8c6da"/><rect x="1880.6" y="769.7" width="5" height="8" rx="1.2" fill="#5a5042"/><rect x="1881.9" y="771.2" width="2" height="4.5" fill="#b8c6da"/><rect x="1888.4" y="770.2" width="5" height="8" rx="1.2" fill="#5a5042"/><rect x="1889.7" y="771.7" width="2" height="4.5" fill="#b8c6da"/><rect x="1896.1" y="770.8" width="5" height="8" rx="1.2" fill="#5a5042"/><rect x="1897.4" y="772.3" width="2" height="4.5" fill="#b8c6da"/><rect x="1903.9" y="771.3" width="5" height="8" rx="1.2" fill="#5a5042"/><rect x="1905.2" y="772.8" width="2" height="4.5" fill="#b8c6da"/><rect x="1911.7" y="771.8" width="5" height="8" rx="1.2" fill="#5a5042"/><rect x="1913.0" y="773.3" width="2" height="4.5" fill="#b8c6da"/><rect x="1919.4" y="772.4" width="5" height="8" rx="1.2" fill="#5a5042"/><rect x="1920.7" y="773.9" width="2" height="4.5" fill="#b8c6da"/><rect x="1927.2" y="772.9" width="5" height="8" rx="1.2" fill="#5a5042"/><rect x="1928.5" y="774.4" width="2" height="4.5" fill="#b8c6da"/><rect x="1935.0" y="773.4" width="5" height="8" rx="1.2" fill="#5a5042"/><rect x="1936.3" y="774.9" width="2" height="4.5" fill="#b8c6da"/><rect x="1942.7" y="774.0" width="5" height="8" rx="1.2" fill="#5a5042"/><rect x="1944.0" y="775.5" width="2" height="4.5" fill="#b8c6da"/><rect x="1950.5" y="774.5" width="5" height="8" rx="1.2" fill="#5a5042"/><rect x="1951.8" y="776.0" width="2" height="4.5" fill="#b8c6da"/>
<circle cx="1680" cy="651" r="6.2" fill="#6e604a"/><circle cx="1680.6" cy="650.6" r="4.4" fill="#b4bcc6"/><path d="M1676.8,651 L1683.2,651 M1680,647.8 L1680,654.2" stroke="#3a3630" stroke-width="1.1"/>
<circle cx="2052" cy="654" r="6.2" fill="#6e604a"/><circle cx="2052.6" cy="653.6" r="4.4" fill="#b4bcc6"/><path d="M2048.8,654 L2055.2,654 M2052,650.8 L2052,657.2" stroke="#3a3630" stroke-width="1.1"/>
<circle cx="1591.8" cy="754" r="6.2" fill="#6e604a"/><circle cx="1592.3999999999999" cy="753.6" r="4.4" fill="#b4bcc6"/><path d="M1588.6,754 L1595.0,754 M1591.8,750.8 L1591.8,757.2" stroke="#3a3630" stroke-width="1.1"/>
<circle cx="1955" cy="763" r="6.2" fill="#6e604a"/><circle cx="1955.6" cy="762.6" r="4.4" fill="#b4bcc6"/><path d="M1951.8,763 L1958.2,763 M1955,759.8 L1955,766.2" stroke="#3a3630" stroke-width="1.1"/>
<circle cx="1815.6" cy="330.4" r="6.2" fill="#6e604a"/><circle cx="1816.1999999999998" cy="330.0" r="4.4" fill="#b4bcc6"/><path d="M1812.3999999999999,330.4 L1818.8,330.4 M1815.6,327.2 L1815.6,333.59999999999997" stroke="#3a3630" stroke-width="1.1"/>
<circle cx="2052.2" cy="325.2" r="6.2" fill="#6e604a"/><circle cx="2052.7999999999997" cy="324.8" r="4.4" fill="#b4bcc6"/><path d="M2049.0,325.2 L2055.3999999999996,325.2 M2052.2,322.0 L2052.2,328.4" stroke="#3a3630" stroke-width="1.1"/>
<circle cx="1849.4" cy="434.4" r="6.2" fill="#6e604a"/><circle cx="1850.0" cy="434.0" r="4.4" fill="#b4bcc6"/><path d="M1846.2,434.4 L1852.6000000000001,434.4 M1849.4,431.2 L1849.4,437.59999999999997" stroke="#3a3630" stroke-width="1.1"/>
<circle cx="1859.8" cy="457.8" r="6.2" fill="#6e604a"/><circle cx="1860.3999999999999" cy="457.40000000000003" r="4.4" fill="#b4bcc6"/><path d="M1856.6,457.8 L1863.0,457.8 M1859.8,454.6 L1859.8,461.0" stroke="#3a3630" stroke-width="1.1"/>
<polyline points="1238.9,428.0 1303.9,473.1 1250.0,549.7 1374.4,634.1" fill="none" stroke="#9a8262" stroke-width="1.2" stroke-linejoin="miter"/>
<polyline points="1374.4,634.1 1429.8,559.4" fill="none" stroke="#f2f2f2" stroke-width="2.0" stroke-linejoin="miter"/>
<polyline points="1429.8,559.4 1469.9,584.3" fill="none" stroke="#9a8262" stroke-width="1.0" stroke-linejoin="miter"/>
<polyline points="1469.9,584.3 1546.0,479.2" fill="none" stroke="#f2f2f2" stroke-width="2.0" stroke-linejoin="miter"/>
<polyline points="1546.0,479.2 1505.9,451.5" fill="none" stroke="#7d8aa0" stroke-width="1.0" stroke-linejoin="miter"/>
<polyline points="1505.9,451.5 1527.5,423.8" fill="none" stroke="#f2f2f2" stroke-width="2.0" stroke-linejoin="miter"/>
<polyline points="1243.3,902.6 1534.0,900.0" fill="none" stroke="#9a8262" stroke-width="1.6" stroke-linejoin="miter"/>
<polyline points="1243.3,902.6 1264.6,930.3 1225.6,956.9 1303.6,1060.4 1342.6,1034.9 1399.4,1110.0 1523.5,1023.2 1465.7,947.0 1534.0,900.0" fill="none" stroke="#9a8262" stroke-width="1.2" stroke-linejoin="miter"/>
<polyline points="1536.2,790.2 1603.2,818.3 1944.3,785.6 2087.6,942.9" fill="none" stroke="#9a8262" stroke-width="1.4" stroke-linejoin="miter"/>
<polyline points="1536.2,790.2 1678.0,947.6 2020.6,913.9 2087.6,942.9" fill="none" stroke="#9a8262" stroke-width="1.4" stroke-linejoin="miter"/>
<polyline points="1678.0,947.6 2019.0,975.6 2087.6,946.0" fill="none" stroke="#9a8262" stroke-width="1.4" stroke-linejoin="miter"/>
<polyline points="1678.0,947.6 1539.3,1108.0" fill="none" stroke="#9a8262" stroke-width="1.2" stroke-linejoin="miter"/>
<polyline points="1539.3,1108.0 1603.2,1078.4" fill="none" stroke="#f2f2f2" stroke-width="2.0" stroke-linejoin="miter"/>
<polyline points="1603.2,1078.4 1947.4,1104.9" fill="none" stroke="#b9ab96" stroke-width="1.6" stroke-linejoin="miter"/>
<polyline points="1947.4,1104.9 2087.6,946.0" fill="none" stroke="#f2f2f2" stroke-width="2.0" stroke-linejoin="miter"/>
<polyline points="2090,1109.8 2114,1109.8 2114,1086" fill="none" stroke="#6fe06f" stroke-width="1.6"/>
<line x1="2114" y1="1109.8" x2="2114" y2="1086" stroke="#f08080" stroke-width="1.6"/>
<path d="M2113.6,1079 L2113.6,1087 Q2113.6,1089 2116.5,1089 Q2119.5,1089 2119.5,1087 L2119.5,1079" fill="none" stroke="#e0e0e0" stroke-width="1"/>
<path d="M2087.5,1105 L2090.5,1115 L2093.5,1105" fill="none" stroke="#e0e0e0" stroke-width="1"/>
<rect x="1832.8" y="136.8" width="298" height="38.6" rx="1.5" fill="#1b1b1b" stroke="#525252" stroke-width="1.8"/>
<text x="1846" y="164" font-size="22" fill="#2290f4" stroke="#2290f4" stroke-width="0.3" opacity="0.999" textLength="83" lengthAdjust="spacingAndGlyphs">Material</text>
<polyline points="2107.5,151.5 2116,160 2124.5,151.5" fill="none" stroke="#d8d8d8" stroke-width="1.7"/>
<defs><linearGradient id="plateG" gradientUnits="userSpaceOnUse" x1="700" y1="380" x2="330" y2="690"><stop offset="0" stop-color="#ebe3d3"/><stop offset="0.2" stop-color="#dccfb5"/><stop offset="0.45" stop-color="#b3a386"/><stop offset="1" stop-color="#927f69"/></linearGradient><linearGradient id="plateL" gradientUnits="userSpaceOnUse" x1="0" y1="700" x2="0" y2="1000"><stop offset="0" stop-color="#a89880" stop-opacity="0"/><stop offset="1" stop-color="#a89880" stop-opacity="0.5"/></linearGradient><radialGradient id="plateH" gradientUnits="userSpaceOnUse" cx="675" cy="455" r="120"><stop offset="0" stop-color="#f4e8cc" stop-opacity="0.55"/><stop offset="1" stop-color="#f4e8cc" stop-opacity="0"/></radialGradient><linearGradient id="slantG" gradientUnits="userSpaceOnUse" x1="420" y1="940" x2="800" y2="660"><stop offset="0" stop-color="#857460"/><stop offset="0.5" stop-color="#7e6d58"/><stop offset="1" stop-color="#958369"/></linearGradient><linearGradient id="frontG" gradientUnits="userSpaceOnUse" x1="420" y1="960" x2="820" y2="700"><stop offset="0" stop-color="#938572"/><stop offset="0.55" stop-color="#9c8f7b"/><stop offset="1" stop-color="#b6ab99"/></linearGradient><linearGradient id="weldG" gradientUnits="userSpaceOnUse" x1="0" y1="958" x2="0" y2="1012"><stop offset="0" stop-color="#d8e0ec"/><stop offset="0.3" stop-color="#9fb0c8"/><stop offset="0.55" stop-color="#8c826e"/><stop offset="1" stop-color="#7c6e58"/></linearGradient><linearGradient id="boxG" x1="0" y1="0" x2="0" y2="1"><stop offset="0" stop-color="#c4baa8"/><stop offset="0.5" stop-color="#b2a792"/><stop offset="1" stop-color="#a99c86"/></linearGradient></defs>
<filter id="mottle" filterUnits="userSpaceOnUse" x="68" y="118" width="1040" height="1028" color-interpolation-filters="sRGB"><feTurbulence type="fractalNoise" baseFrequency="0.16" numOctaves="2" seed="5" result="t"/><feColorMatrix in="t" type="matrix" values="0.33 0.33 0.33 0 0  0.33 0.33 0.33 0 0  0.33 0.33 0.33 0 0  0 0 0 0 1" result="g"/><feComposite in="SourceGraphic" in2="g" operator="arithmetic" k1="0" k2="1" k3="0.32" k4="-0.16" result="c"/><feComposite in="c" in2="SourceGraphic" operator="in"/></filter>
<g filter="url(#mottle)">
<polygon points="782.2,118.0 818.0,118.0 822.0,560.0 318.0,949.0 274.0,1059.0 212.0,697.0 731.2,253.0 747.7,225.0 764.1,184.0 772.3,142.9" fill="url(#plateG)"/>
<polygon points="782.2,118.0 818.0,118.0 822.0,560.0 318.0,949.0 274.0,1059.0 212.0,697.0 731.2,253.0 747.7,225.0 764.1,184.0 772.3,142.9" fill="url(#plateL)"/>
<polygon points="782.2,118.0 818.0,118.0 822.0,560.0 318.0,949.0 274.0,1059.0 212.0,697.0 731.2,253.0 747.7,225.0 764.1,184.0 772.3,142.9" fill="url(#plateH)"/>
<polygon points="405.0,628.0 425.0,607.0 470.0,605.0 495.0,618.0 505.0,640.0 540.0,650.0 590.0,640.0 640.0,600.0 680.0,590.0 690.0,640.0 660.0,680.0 600.0,700.0 560.0,720.0 520.0,740.0 480.0,760.0 460.0,740.0 440.0,700.0 410.0,670.0" fill="#b8b09e" opacity="0.45"/>
<polygon points="214.0,700.5 749.3,248.0 772.3,202.0 785.5,159.3 797.0,118.0 801.5,118.0 790.0,159.3 777.2,202.0 754.2,250.0 217.0,704.5" fill="#c9b58e"/>
<polygon points="212.0,697.0 731.2,253.0 747.7,225.0 764.1,184.0 772.3,142.9 782.2,118.0 797.0,118.0 785.5,159.3 772.3,202.0 749.3,248.0 214.0,700.5" fill="#857358"/>
<polygon points="318.0,949.0 274.0,1059.0 276.0,1040.0 307.0,958.0" fill="#7b6a52"/>
<polyline points="212.0,698.0 274.0,1059.0" stroke="#cdb996" stroke-width="2" fill="none"/>
<polyline points="817.0,118.0 821.0,560.0" stroke="#86827c" stroke-width="3" fill="none"/>
<g transform="translate(226.5,705.0) rotate(34.0) scale(0.85)"><rect x="-8.4" y="-5.2" width="16.8" height="10.4" rx="5.2" fill="#7c6e58" opacity="0.55"/><rect x="-6.2" y="-3.0" width="12.4" height="6.0" rx="3.0" fill="#131313"/><path d="M-4.7,-2.2 L4.7,-2.2" stroke="#c4cfdc" stroke-width="1.4" stroke-linecap="round"/><path d="M-4.2,0.3 L4.2,0.3" stroke="#9aa4b0" stroke-width="0.8" opacity="0.8"/></g>
<g transform="translate(237.8,695.5) rotate(34.5) scale(0.86)"><rect x="-8.4" y="-5.2" width="16.8" height="10.4" rx="5.2" fill="#7c6e58" opacity="0.55"/><rect x="-6.2" y="-3.0" width="12.4" height="6.0" rx="3.0" fill="#131313"/><path d="M-4.7,-2.2 L4.7,-2.2" stroke="#c4cfdc" stroke-width="1.4" stroke-linecap="round"/><path d="M-4.2,0.3 L4.2,0.3" stroke="#9aa4b0" stroke-width="0.8" opacity="0.8"/></g>
<g transform="translate(249.1,685.9) rotate(35.0) scale(0.87)"><rect x="-8.4" y="-5.2" width="16.8" height="10.4" rx="5.2" fill="#7c6e58" opacity="0.55"/><rect x="-6.2" y="-3.0" width="12.4" height="6.0" rx="3.0" fill="#131313"/><path d="M-4.7,-2.2 L4.7,-2.2" stroke="#c4cfdc" stroke-width="1.4" stroke-linecap="round"/><path d="M-4.2,0.3 L4.2,0.3" stroke="#9aa4b0" stroke-width="0.8" opacity="0.8"/></g>
<g transform="translate(260.5,676.3) rotate(35.6) scale(0.87)"><rect x="-8.4" y="-5.2" width="16.8" height="10.4" rx="5.2" fill="#7c6e58" opacity="0.55"/><rect x="-6.2" y="-3.0" width="12.4" height="6.0" rx="3.0" fill="#131313"/><path d="M-4.7,-2.2 L4.7,-2.2" stroke="#c4cfdc" stroke-width="1.4" stroke-linecap="round"/><path d="M-4.2,0.3 L4.2,0.3" stroke="#9aa4b0" stroke-width="0.8" opacity="0.8"/></g>
<g transform="translate(271.9,666.6) rotate(36.1) scale(0.88)"><rect x="-8.4" y="-5.2" width="16.8" height="10.4" rx="5.2" fill="#7c6e58" opacity="0.55"/><rect x="-6.2" y="-3.0" width="12.4" height="6.0" rx="3.0" fill="#131313"/><path d="M-4.7,-2.2 L4.7,-2.2" stroke="#c4cfdc" stroke-width="1.4" stroke-linecap="round"/><path d="M-4.2,0.3 L4.2,0.3" stroke="#9aa4b0" stroke-width="0.8" opacity="0.8"/></g>
<g transform="translate(283.4,657.0) rotate(36.6) scale(0.89)"><rect x="-8.4" y="-5.2" width="16.8" height="10.4" rx="5.2" fill="#7c6e58" opacity="0.55"/><rect x="-6.2" y="-3.0" width="12.4" height="6.0" rx="3.0" fill="#131313"/><path d="M-4.7,-2.2 L4.7,-2.2" stroke="#c4cfdc" stroke-width="1.4" stroke-linecap="round"/><path d="M-4.2,0.3 L4.2,0.3" stroke="#9aa4b0" stroke-width="0.8" opacity="0.8"/></g>
<g transform="translate(294.9,647.3) rotate(37.1) scale(0.90)"><rect x="-8.4" y="-5.2" width="16.8" height="10.4" rx="5.2" fill="#7c6e58" opacity="0.55"/><rect x="-6.2" y="-3.0" width="12.4" height="6.0" rx="3.0" fill="#131313"/><path d="M-4.7,-2.2 L4.7,-2.2" stroke="#c4cfdc" stroke-width="1.4" stroke-linecap="round"/><path d="M-4.2,0.3 L4.2,0.3" stroke="#9aa4b0" stroke-width="0.8" opacity="0.8"/></g>
<g transform="translate(306.5,637.5) rotate(37.7) scale(0.90)"><rect x="-8.4" y="-5.2" width="16.8" height="10.4" rx="5.2" fill="#7c6e58" opacity="0.55"/><rect x="-6.2" y="-3.0" width="12.4" height="6.0" rx="3.0" fill="#131313"/><path d="M-4.7,-2.2 L4.7,-2.2" stroke="#c4cfdc" stroke-width="1.4" stroke-linecap="round"/><path d="M-4.2,0.3 L4.2,0.3" stroke="#9aa4b0" stroke-width="0.8" opacity="0.8"/></g>
<g transform="translate(318.0,627.7) rotate(38.2) scale(0.91)"><rect x="-8.4" y="-5.2" width="16.8" height="10.4" rx="5.2" fill="#7c6e58" opacity="0.55"/><rect x="-6.2" y="-3.0" width="12.4" height="6.0" rx="3.0" fill="#131313"/><path d="M-4.7,-2.2 L4.7,-2.2" stroke="#c4cfdc" stroke-width="1.4" stroke-linecap="round"/><path d="M-4.2,0.3 L4.2,0.3" stroke="#9aa4b0" stroke-width="0.8" opacity="0.8"/></g>
<g transform="translate(329.7,617.9) rotate(38.7) scale(0.92)"><rect x="-8.4" y="-5.2" width="16.8" height="10.4" rx="5.2" fill="#7c6e58" opacity="0.55"/><rect x="-6.2" y="-3.0" width="12.4" height="6.0" rx="3.0" fill="#131313"/><path d="M-4.7,-2.2 L4.7,-2.2" stroke="#c4cfdc" stroke-width="1.4" stroke-linecap="round"/><path d="M-4.2,0.3 L4.2,0.3" stroke="#9aa4b0" stroke-width="0.8" opacity="0.8"/></g>
<g transform="translate(341.3,608.1) rotate(39.3) scale(0.93)"><rect x="-8.4" y="-5.2" width="16.8" height="10.4" rx="5.2" fill="#7c6e58" opacity="0.55"/><rect x="-6.2" y="-3.0" width="12.4" height="6.0" rx="3.0" fill="#131313"/><path d="M-4.7,-2.2 L4.7,-2.2" stroke="#c4cfdc" stroke-width="1.4" stroke-linecap="round"/><path d="M-4.2,0.3 L4.2,0.3" stroke="#9aa4b0" stroke-width="0.8" opacity="0.8"/></g>
<g transform="translate(353.0,598.2) rotate(39.8) scale(0.93)"><rect x="-8.4" y="-5.2" width="16.8" height="10.4" rx="5.2" fill="#7c6e58" opacity="0.55"/><rect x="-6.2" y="-3.0" width="12.4" height="6.0" rx="3.0" fill="#131313"/><path d="M-4.7,-2.2 L4.7,-2.2" stroke="#c4cfdc" stroke-width="1.4" stroke-linecap="round"/><path d="M-4.2,0.3 L4.2,0.3" stroke="#9aa4b0" stroke-width="0.8" opacity="0.8"/></g>
<g transform="translate(364.8,588.3) rotate(40.4) scale(0.94)"><rect x="-8.4" y="-5.2" width="16.8" height="10.4" rx="5.2" fill="#7c6e58" opacity="0.55"/><rect x="-6.2" y="-3.0" width="12.4" height="6.0" rx="3.0" fill="#131313"/><path d="M-4.7,-2.2 L4.7,-2.2" stroke="#c4cfdc" stroke-width="1.4" stroke-linecap="round"/><path d="M-4.2,0.3 L4.2,0.3" stroke="#9aa4b0" stroke-width="0.8" opacity="0.8"/></g>
<g transform="translate(376.6,578.3) rotate(40.9) scale(0.95)"><rect x="-8.4" y="-5.2" width="16.8" height="10.4" rx="5.2" fill="#7c6e58" opacity="0.55"/><rect x="-6.2" y="-3.0" width="12.4" height="6.0" rx="3.0" fill="#131313"/><path d="M-4.7,-2.2 L4.7,-2.2" stroke="#c4cfdc" stroke-width="1.4" stroke-linecap="round"/><path d="M-4.2,0.3 L4.2,0.3" stroke="#9aa4b0" stroke-width="0.8" opacity="0.8"/></g>
<g transform="translate(388.4,568.3) rotate(41.4) scale(0.96)"><rect x="-8.4" y="-5.2" width="16.8" height="10.4" rx="5.2" fill="#7c6e58" opacity="0.55"/><rect x="-6.2" y="-3.0" width="12.4" height="6.0" rx="3.0" fill="#131313"/><path d="M-4.7,-2.2 L4.7,-2.2" stroke="#c4cfdc" stroke-width="1.4" stroke-linecap="round"/><path d="M-4.2,0.3 L4.2,0.3" stroke="#9aa4b0" stroke-width="0.8" opacity="0.8"/></g>
<g transform="translate(400.3,558.3) rotate(42.0) scale(0.97)"><rect x="-8.4" y="-5.2" width="16.8" height="10.4" rx="5.2" fill="#7c6e58" opacity="0.55"/><rect x="-6.2" y="-3.0" width="12.4" height="6.0" rx="3.0" fill="#131313"/><path d="M-4.7,-2.2 L4.7,-2.2" stroke="#c4cfdc" stroke-width="1.4" stroke-linecap="round"/><path d="M-4.2,0.3 L4.2,0.3" stroke="#9aa4b0" stroke-width="0.8" opacity="0.8"/></g>
<g transform="translate(412.2,548.3) rotate(42.5) scale(0.97)"><rect x="-8.4" y="-5.2" width="16.8" height="10.4" rx="5.2" fill="#7c6e58" opacity="0.55"/><rect x="-6.2" y="-3.0" width="12.4" height="6.0" rx="3.0" fill="#131313"/><path d="M-4.7,-2.2 L4.7,-2.2" stroke="#c4cfdc" stroke-width="1.4" stroke-linecap="round"/><path d="M-4.2,0.3 L4.2,0.3" stroke="#9aa4b0" stroke-width="0.8" opacity="0.8"/></g>
<g transform="translate(424.1,538.2) rotate(43.1) scale(0.98)"><rect x="-8.4" y="-5.2" width="16.8" height="10.4" rx="5.2" fill="#7c6e58" opacity="0.55"/><rect x="-6.2" y="-3.0" width="12.4" height="6.0" rx="3.0" fill="#131313"/><path d="M-4.7,-2.2 L4.7,-2.2" stroke="#c4cfdc" stroke-width="1.4" stroke-linecap="round"/><path d="M-4.2,0.3 L4.2,0.3" stroke="#9aa4b0" stroke-width="0.8" opacity="0.8"/></g>
<g transform="translate(436.1,528.1) rotate(43.6) scale(0.99)"><rect x="-8.4" y="-5.2" width="16.8" height="10.4" rx="5.2" fill="#7c6e58" opacity="0.55"/><rect x="-6.2" y="-3.0" width="12.4" height="6.0" rx="3.0" fill="#131313"/><path d="M-4.7,-2.2 L4.7,-2.2" stroke="#c4cfdc" stroke-width="1.4" stroke-linecap="round"/><path d="M-4.2,0.3 L4.2,0.3" stroke="#9aa4b0" stroke-width="0.8" opacity="0.8"/></g>
<g transform="translate(448.1,517.9) rotate(44.2) scale(1.00)"><rect x="-8.4" y="-5.2" width="16.8" height="10.4" rx="5.2" fill="#7c6e58" opacity="0.55"/><rect x="-6.2" y="-3.0" width="12.4" height="6.0" rx="3.0" fill="#131313"/><path d="M-4.7,-2.2 L4.7,-2.2" stroke="#c4cfdc" stroke-width="1.4" stroke-linecap="round"/><path d="M-4.2,0.3 L4.2,0.3" stroke="#9aa4b0" stroke-width="0.8" opacity="0.8"/></g>
<g transform="translate(460.2,507.7) rotate(44.7) scale(1.01)"><rect x="-8.4" y="-5.2" width="16.8" height="10.4" rx="5.2" fill="#7c6e58" opacity="0.55"/><rect x="-6.2" y="-3.0" width="12.4" height="6.0" rx="3.0" fill="#131313"/><path d="M-4.7,-2.2 L4.7,-2.2" stroke="#c4cfdc" stroke-width="1.4" stroke-linecap="round"/><path d="M-4.2,0.3 L4.2,0.3" stroke="#9aa4b0" stroke-width="0.8" opacity="0.8"/></g>
<g transform="translate(472.3,497.5) rotate(45.3) scale(1.01)"><rect x="-8.4" y="-5.2" width="16.8" height="10.4" rx="5.2" fill="#7c6e58" opacity="0.55"/><rect x="-6.2" y="-3.0" width="12.4" height="6.0" rx="3.0" fill="#131313"/><path d="M-4.7,-2.2 L4.7,-2.2" stroke="#c4cfdc" stroke-width="1.4" stroke-linecap="round"/><path d="M-4.2,0.3 L4.2,0.3" stroke="#9aa4b0" stroke-width="0.8" opacity="0.8"/></g>
<g transform="translate(484.5,487.3) rotate(45.8) scale(1.02)"><rect x="-8.4" y="-5.2" width="16.8" height="10.4" rx="5.2" fill="#7c6e58" opacity="0.55"/><rect x="-6.2" y="-3.0" width="12.4" height="6.0" rx="3.0" fill="#131313"/><path d="M-4.7,-2.2 L4.7,-2.2" stroke="#c4cfdc" stroke-width="1.4" stroke-linecap="round"/><path d="M-4.2,0.3 L4.2,0.3" stroke="#9aa4b0" stroke-width="0.8" opacity="0.8"/></g>
<g transform="translate(496.7,477.0) rotate(46.4) scale(1.03)"><rect x="-8.4" y="-5.2" width="16.8" height="10.4" rx="5.2" fill="#7c6e58" opacity="0.55"/><rect x="-6.2" y="-3.0" width="12.4" height="6.0" rx="3.0" fill="#131313"/><path d="M-4.7,-2.2 L4.7,-2.2" stroke="#c4cfdc" stroke-width="1.4" stroke-linecap="round"/><path d="M-4.2,0.3 L4.2,0.3" stroke="#9aa4b0" stroke-width="0.8" opacity="0.8"/></g>
<g transform="translate(508.9,466.6) rotate(47.0) scale(1.04)"><rect x="-8.4" y="-5.2" width="16.8" height="10.4" rx="5.2" fill="#7c6e58" opacity="0.55"/><rect x="-6.2" y="-3.0" width="12.4" height="6.0" rx="3.0" fill="#131313"/><path d="M-4.7,-2.2 L4.7,-2.2" stroke="#c4cfdc" stroke-width="1.4" stroke-linecap="round"/><path d="M-4.2,0.3 L4.2,0.3" stroke="#9aa4b0" stroke-width="0.8" opacity="0.8"/></g>
<g transform="translate(521.2,456.3) rotate(47.5) scale(1.05)"><rect x="-8.4" y="-5.2" width="16.8" height="10.4" rx="5.2" fill="#7c6e58" opacity="0.55"/><rect x="-6.2" y="-3.0" width="12.4" height="6.0" rx="3.0" fill="#131313"/><path d="M-4.7,-2.2 L4.7,-2.2" stroke="#c4cfdc" stroke-width="1.4" stroke-linecap="round"/><path d="M-4.2,0.3 L4.2,0.3" stroke="#9aa4b0" stroke-width="0.8" opacity="0.8"/></g>
<g transform="translate(533.5,445.9) rotate(48.1) scale(1.06)"><rect x="-8.4" y="-5.2" width="16.8" height="10.4" rx="5.2" fill="#7c6e58" opacity="0.55"/><rect x="-6.2" y="-3.0" width="12.4" height="6.0" rx="3.0" fill="#131313"/><path d="M-4.7,-2.2 L4.7,-2.2" stroke="#c4cfdc" stroke-width="1.4" stroke-linecap="round"/><path d="M-4.2,0.3 L4.2,0.3" stroke="#9aa4b0" stroke-width="0.8" opacity="0.8"/></g>
<g transform="translate(545.8,435.5) rotate(48.7) scale(1.06)"><rect x="-8.4" y="-5.2" width="16.8" height="10.4" rx="5.2" fill="#7c6e58" opacity="0.55"/><rect x="-6.2" y="-3.0" width="12.4" height="6.0" rx="3.0" fill="#131313"/><path d="M-4.7,-2.2 L4.7,-2.2" stroke="#c4cfdc" stroke-width="1.4" stroke-linecap="round"/><path d="M-4.2,0.3 L4.2,0.3" stroke="#9aa4b0" stroke-width="0.8" opacity="0.8"/></g>
<g transform="translate(558.2,425.0) rotate(49.2) scale(1.07)"><rect x="-8.4" y="-5.2" width="16.8" height="10.4" rx="5.2" fill="#7c6e58" opacity="0.55"/><rect x="-6.2" y="-3.0" width="12.4" height="6.0" rx="3.0" fill="#131313"/><path d="M-4.7,-2.2 L4.7,-2.2" stroke="#c4cfdc" stroke-width="1.4" stroke-linecap="round"/><path d="M-4.2,0.3 L4.2,0.3" stroke="#9aa4b0" stroke-width="0.8" opacity="0.8"/></g>
<g transform="translate(570.7,414.5) rotate(49.8) scale(1.08)"><rect x="-8.4" y="-5.2" width="16.8" height="10.4" rx="5.2" fill="#7c6e58" opacity="0.55"/><rect x="-6.2" y="-3.0" width="12.4" height="6.0" rx="3.0" fill="#131313"/><path d="M-4.7,-2.2 L4.7,-2.2" stroke="#c4cfdc" stroke-width="1.4" stroke-linecap="round"/><path d="M-4.2,0.3 L4.2,0.3" stroke="#9aa4b0" stroke-width="0.8" opacity="0.8"/></g>
<g transform="translate(583.1,404.0) rotate(50.4) scale(1.09)"><rect x="-8.4" y="-5.2" width="16.8" height="10.4" rx="5.2" fill="#7c6e58" opacity="0.55"/><rect x="-6.2" y="-3.0" width="12.4" height="6.0" rx="3.0" fill="#131313"/><path d="M-4.7,-2.2 L4.7,-2.2" stroke="#c4cfdc" stroke-width="1.4" stroke-linecap="round"/><path d="M-4.2,0.3 L4.2,0.3" stroke="#9aa4b0" stroke-width="0.8" opacity="0.8"/></g>
<g transform="translate(595.7,393.4) rotate(51.0) scale(1.10)"><rect x="-8.4" y="-5.2" width="16.8" height="10.4" rx="5.2" fill="#7c6e58" opacity="0.55"/><rect x="-6.2" y="-3.0" width="12.4" height="6.0" rx="3.0" fill="#131313"/><path d="M-4.7,-2.2 L4.7,-2.2" stroke="#c4cfdc" stroke-width="1.4" stroke-linecap="round"/><path d="M-4.2,0.3 L4.2,0.3" stroke="#9aa4b0" stroke-width="0.8" opacity="0.8"/></g>
<g transform="translate(608.2,382.8) rotate(51.5) scale(1.11)"><rect x="-8.4" y="-5.2" width="16.8" height="10.4" rx="5.2" fill="#7c6e58" opacity="0.55"/><rect x="-6.2" y="-3.0" width="12.4" height="6.0" rx="3.0" fill="#131313"/><path d="M-4.7,-2.2 L4.7,-2.2" stroke="#c4cfdc" stroke-width="1.4" stroke-linecap="round"/><path d="M-4.2,0.3 L4.2,0.3" stroke="#9aa4b0" stroke-width="0.8" opacity="0.8"/></g>
<g transform="translate(620.8,372.2) rotate(52.1) scale(1.11)"><rect x="-8.4" y="-5.2" width="16.8" height="10.4" rx="5.2" fill="#7c6e58" opacity="0.55"/><rect x="-6.2" y="-3.0" width="12.4" height="6.0" rx="3.0" fill="#131313"/><path d="M-4.7,-2.2 L4.7,-2.2" stroke="#c4cfdc" stroke-width="1.4" stroke-linecap="round"/><path d="M-4.2,0.3 L4.2,0.3" stroke="#9aa4b0" stroke-width="0.8" opacity="0.8"/></g>
<g transform="translate(633.5,361.5) rotate(52.7) scale(1.12)"><rect x="-8.4" y="-5.2" width="16.8" height="10.4" rx="5.2" fill="#7c6e58" opacity="0.55"/><rect x="-6.2" y="-3.0" width="12.4" height="6.0" rx="3.0" fill="#131313"/><path d="M-4.7,-2.2 L4.7,-2.2" stroke="#c4cfdc" stroke-width="1.4" stroke-linecap="round"/><path d="M-4.2,0.3 L4.2,0.3" stroke="#9aa4b0" stroke-width="0.8" opacity="0.8"/></g>
<g transform="translate(646.1,350.8) rotate(53.3) scale(1.13)"><rect x="-8.4" y="-5.2" width="16.8" height="10.4" rx="5.2" fill="#7c6e58" opacity="0.55"/><rect x="-6.2" y="-3.0" width="12.4" height="6.0" rx="3.0" fill="#131313"/><path d="M-4.7,-2.2 L4.7,-2.2" stroke="#c4cfdc" stroke-width="1.4" stroke-linecap="round"/><path d="M-4.2,0.3 L4.2,0.3" stroke="#9aa4b0" stroke-width="0.8" opacity="0.8"/></g>
<g transform="translate(658.8,340.1) rotate(53.9) scale(1.14)"><rect x="-8.4" y="-5.2" width="16.8" height="10.4" rx="5.2" fill="#7c6e58" opacity="0.55"/><rect x="-6.2" y="-3.0" width="12.4" height="6.0" rx="3.0" fill="#131313"/><path d="M-4.7,-2.2 L4.7,-2.2" stroke="#c4cfdc" stroke-width="1.4" stroke-linecap="round"/><path d="M-4.2,0.3 L4.2,0.3" stroke="#9aa4b0" stroke-width="0.8" opacity="0.8"/></g>
<g transform="translate(671.6,329.3) rotate(54.4) scale(1.15)"><rect x="-8.4" y="-5.2" width="16.8" height="10.4" rx="5.2" fill="#7c6e58" opacity="0.55"/><rect x="-6.2" y="-3.0" width="12.4" height="6.0" rx="3.0" fill="#131313"/><path d="M-4.7,-2.2 L4.7,-2.2" stroke="#c4cfdc" stroke-width="1.4" stroke-linecap="round"/><path d="M-4.2,0.3 L4.2,0.3" stroke="#9aa4b0" stroke-width="0.8" opacity="0.8"/></g>
<g transform="translate(684.4,318.5) rotate(55.0) scale(1.16)"><rect x="-8.4" y="-5.2" width="16.8" height="10.4" rx="5.2" fill="#7c6e58" opacity="0.55"/><rect x="-6.2" y="-3.0" width="12.4" height="6.0" rx="3.0" fill="#131313"/><path d="M-4.7,-2.2 L4.7,-2.2" stroke="#c4cfdc" stroke-width="1.4" stroke-linecap="round"/><path d="M-4.2,0.3 L4.2,0.3" stroke="#9aa4b0" stroke-width="0.8" opacity="0.8"/></g>
<g transform="translate(697.2,307.7) rotate(55.6) scale(1.17)"><rect x="-8.4" y="-5.2" width="16.8" height="10.4" rx="5.2" fill="#7c6e58" opacity="0.55"/><rect x="-6.2" y="-3.0" width="12.4" height="6.0" rx="3.0" fill="#131313"/><path d="M-4.7,-2.2 L4.7,-2.2" stroke="#c4cfdc" stroke-width="1.4" stroke-linecap="round"/><path d="M-4.2,0.3 L4.2,0.3" stroke="#9aa4b0" stroke-width="0.8" opacity="0.8"/></g>
<g transform="translate(710.1,296.8) rotate(56.2) scale(1.17)"><rect x="-8.4" y="-5.2" width="16.8" height="10.4" rx="5.2" fill="#7c6e58" opacity="0.55"/><rect x="-6.2" y="-3.0" width="12.4" height="6.0" rx="3.0" fill="#131313"/><path d="M-4.7,-2.2 L4.7,-2.2" stroke="#c4cfdc" stroke-width="1.4" stroke-linecap="round"/><path d="M-4.2,0.3 L4.2,0.3" stroke="#9aa4b0" stroke-width="0.8" opacity="0.8"/></g>
<g transform="translate(723.0,285.9) rotate(56.8) scale(1.18)"><rect x="-8.4" y="-5.2" width="16.8" height="10.4" rx="5.2" fill="#7c6e58" opacity="0.55"/><rect x="-6.2" y="-3.0" width="12.4" height="6.0" rx="3.0" fill="#131313"/><path d="M-4.7,-2.2 L4.7,-2.2" stroke="#c4cfdc" stroke-width="1.4" stroke-linecap="round"/><path d="M-4.2,0.3 L4.2,0.3" stroke="#9aa4b0" stroke-width="0.8" opacity="0.8"/></g>
<g transform="translate(736.0,275.0) rotate(57.4) scale(1.19)"><rect x="-8.4" y="-5.2" width="16.8" height="10.4" rx="5.2" fill="#7c6e58" opacity="0.55"/><rect x="-6.2" y="-3.0" width="12.4" height="6.0" rx="3.0" fill="#131313"/><path d="M-4.7,-2.2 L4.7,-2.2" stroke="#c4cfdc" stroke-width="1.4" stroke-linecap="round"/><path d="M-4.2,0.3 L4.2,0.3" stroke="#9aa4b0" stroke-width="0.8" opacity="0.8"/></g>
<g transform="translate(749.0,264.0) rotate(58.0) scale(1.20)"><rect x="-8.4" y="-5.2" width="16.8" height="10.4" rx="5.2" fill="#7c6e58" opacity="0.55"/><rect x="-6.2" y="-3.0" width="12.4" height="6.0" rx="3.0" fill="#131313"/><path d="M-4.7,-2.2 L4.7,-2.2" stroke="#c4cfdc" stroke-width="1.4" stroke-linecap="round"/><path d="M-4.2,0.3 L4.2,0.3" stroke="#9aa4b0" stroke-width="0.8" opacity="0.8"/></g>
<g transform="translate(312.5,937.8) rotate(38.0) scale(0.85)"><rect x="-8.4" y="-5.2" width="16.8" height="10.4" rx="5.2" fill="#7c6e58" opacity="0.55"/><rect x="-6.2" y="-3.0" width="12.4" height="6.0" rx="3.0" fill="#131313"/><path d="M-4.7,-2.2 L4.7,-2.2" stroke="#c4cfdc" stroke-width="1.4" stroke-linecap="round"/><path d="M-4.2,0.3 L4.2,0.3" stroke="#9aa4b0" stroke-width="0.8" opacity="0.8"/></g>
<g transform="translate(323.7,929.2) rotate(38.4) scale(0.86)"><rect x="-8.4" y="-5.2" width="16.8" height="10.4" rx="5.2" fill="#7c6e58" opacity="0.55"/><rect x="-6.2" y="-3.0" width="12.4" height="6.0" rx="3.0" fill="#131313"/><path d="M-4.7,-2.2 L4.7,-2.2" stroke="#c4cfdc" stroke-width="1.4" stroke-linecap="round"/><path d="M-4.2,0.3 L4.2,0.3" stroke="#9aa4b0" stroke-width="0.8" opacity="0.8"/></g>
<g transform="translate(334.9,920.6) rotate(38.9) scale(0.87)"><rect x="-8.4" y="-5.2" width="16.8" height="10.4" rx="5.2" fill="#7c6e58" opacity="0.55"/><rect x="-6.2" y="-3.0" width="12.4" height="6.0" rx="3.0" fill="#131313"/><path d="M-4.7,-2.2 L4.7,-2.2" stroke="#c4cfdc" stroke-width="1.4" stroke-linecap="round"/><path d="M-4.2,0.3 L4.2,0.3" stroke="#9aa4b0" stroke-width="0.8" opacity="0.8"/></g>
<g transform="translate(346.2,911.9) rotate(39.3) scale(0.87)"><rect x="-8.4" y="-5.2" width="16.8" height="10.4" rx="5.2" fill="#7c6e58" opacity="0.55"/><rect x="-6.2" y="-3.0" width="12.4" height="6.0" rx="3.0" fill="#131313"/><path d="M-4.7,-2.2 L4.7,-2.2" stroke="#c4cfdc" stroke-width="1.4" stroke-linecap="round"/><path d="M-4.2,0.3 L4.2,0.3" stroke="#9aa4b0" stroke-width="0.8" opacity="0.8"/></g>
<g transform="translate(357.5,903.2) rotate(39.8) scale(0.88)"><rect x="-8.4" y="-5.2" width="16.8" height="10.4" rx="5.2" fill="#7c6e58" opacity="0.55"/><rect x="-6.2" y="-3.0" width="12.4" height="6.0" rx="3.0" fill="#131313"/><path d="M-4.7,-2.2 L4.7,-2.2" stroke="#c4cfdc" stroke-width="1.4" stroke-linecap="round"/><path d="M-4.2,0.3 L4.2,0.3" stroke="#9aa4b0" stroke-width="0.8" opacity="0.8"/></g>
<g transform="translate(369.0,894.4) rotate(40.3) scale(0.89)"><rect x="-8.4" y="-5.2" width="16.8" height="10.4" rx="5.2" fill="#7c6e58" opacity="0.55"/><rect x="-6.2" y="-3.0" width="12.4" height="6.0" rx="3.0" fill="#131313"/><path d="M-4.7,-2.2 L4.7,-2.2" stroke="#c4cfdc" stroke-width="1.4" stroke-linecap="round"/><path d="M-4.2,0.3 L4.2,0.3" stroke="#9aa4b0" stroke-width="0.8" opacity="0.8"/></g>
<g transform="translate(380.5,885.5) rotate(40.7) scale(0.90)"><rect x="-8.4" y="-5.2" width="16.8" height="10.4" rx="5.2" fill="#7c6e58" opacity="0.55"/><rect x="-6.2" y="-3.0" width="12.4" height="6.0" rx="3.0" fill="#131313"/><path d="M-4.7,-2.2 L4.7,-2.2" stroke="#c4cfdc" stroke-width="1.4" stroke-linecap="round"/><path d="M-4.2,0.3 L4.2,0.3" stroke="#9aa4b0" stroke-width="0.8" opacity="0.8"/></g>
<g transform="translate(392.1,876.6) rotate(41.2) scale(0.91)"><rect x="-8.4" y="-5.2" width="16.8" height="10.4" rx="5.2" fill="#7c6e58" opacity="0.55"/><rect x="-6.2" y="-3.0" width="12.4" height="6.0" rx="3.0" fill="#131313"/><path d="M-4.7,-2.2 L4.7,-2.2" stroke="#c4cfdc" stroke-width="1.4" stroke-linecap="round"/><path d="M-4.2,0.3 L4.2,0.3" stroke="#9aa4b0" stroke-width="0.8" opacity="0.8"/></g>
<g transform="translate(403.7,867.7) rotate(41.6) scale(0.91)"><rect x="-8.4" y="-5.2" width="16.8" height="10.4" rx="5.2" fill="#7c6e58" opacity="0.55"/><rect x="-6.2" y="-3.0" width="12.4" height="6.0" rx="3.0" fill="#131313"/><path d="M-4.7,-2.2 L4.7,-2.2" stroke="#c4cfdc" stroke-width="1.4" stroke-linecap="round"/><path d="M-4.2,0.3 L4.2,0.3" stroke="#9aa4b0" stroke-width="0.8" opacity="0.8"/></g>
<g transform="translate(415.4,858.7) rotate(42.1) scale(0.92)"><rect x="-8.4" y="-5.2" width="16.8" height="10.4" rx="5.2" fill="#7c6e58" opacity="0.55"/><rect x="-6.2" y="-3.0" width="12.4" height="6.0" rx="3.0" fill="#131313"/><path d="M-4.7,-2.2 L4.7,-2.2" stroke="#c4cfdc" stroke-width="1.4" stroke-linecap="round"/><path d="M-4.2,0.3 L4.2,0.3" stroke="#9aa4b0" stroke-width="0.8" opacity="0.8"/></g>
<g transform="translate(427.2,849.6) rotate(42.6) scale(0.93)"><rect x="-8.4" y="-5.2" width="16.8" height="10.4" rx="5.2" fill="#7c6e58" opacity="0.55"/><rect x="-6.2" y="-3.0" width="12.4" height="6.0" rx="3.0" fill="#131313"/><path d="M-4.7,-2.2 L4.7,-2.2" stroke="#c4cfdc" stroke-width="1.4" stroke-linecap="round"/><path d="M-4.2,0.3 L4.2,0.3" stroke="#9aa4b0" stroke-width="0.8" opacity="0.8"/></g>
<g transform="translate(439.1,840.5) rotate(43.1) scale(0.94)"><rect x="-8.4" y="-5.2" width="16.8" height="10.4" rx="5.2" fill="#7c6e58" opacity="0.55"/><rect x="-6.2" y="-3.0" width="12.4" height="6.0" rx="3.0" fill="#131313"/><path d="M-4.7,-2.2 L4.7,-2.2" stroke="#c4cfdc" stroke-width="1.4" stroke-linecap="round"/><path d="M-4.2,0.3 L4.2,0.3" stroke="#9aa4b0" stroke-width="0.8" opacity="0.8"/></g>
<g transform="translate(451.0,831.3) rotate(43.5) scale(0.95)"><rect x="-8.4" y="-5.2" width="16.8" height="10.4" rx="5.2" fill="#7c6e58" opacity="0.55"/><rect x="-6.2" y="-3.0" width="12.4" height="6.0" rx="3.0" fill="#131313"/><path d="M-4.7,-2.2 L4.7,-2.2" stroke="#c4cfdc" stroke-width="1.4" stroke-linecap="round"/><path d="M-4.2,0.3 L4.2,0.3" stroke="#9aa4b0" stroke-width="0.8" opacity="0.8"/></g>
<g transform="translate(463.0,822.1) rotate(44.0) scale(0.96)"><rect x="-8.4" y="-5.2" width="16.8" height="10.4" rx="5.2" fill="#7c6e58" opacity="0.55"/><rect x="-6.2" y="-3.0" width="12.4" height="6.0" rx="3.0" fill="#131313"/><path d="M-4.7,-2.2 L4.7,-2.2" stroke="#c4cfdc" stroke-width="1.4" stroke-linecap="round"/><path d="M-4.2,0.3 L4.2,0.3" stroke="#9aa4b0" stroke-width="0.8" opacity="0.8"/></g>
<g transform="translate(475.0,812.8) rotate(44.5) scale(0.96)"><rect x="-8.4" y="-5.2" width="16.8" height="10.4" rx="5.2" fill="#7c6e58" opacity="0.55"/><rect x="-6.2" y="-3.0" width="12.4" height="6.0" rx="3.0" fill="#131313"/><path d="M-4.7,-2.2 L4.7,-2.2" stroke="#c4cfdc" stroke-width="1.4" stroke-linecap="round"/><path d="M-4.2,0.3 L4.2,0.3" stroke="#9aa4b0" stroke-width="0.8" opacity="0.8"/></g>
<g transform="translate(487.2,803.5) rotate(45.0) scale(0.97)"><rect x="-8.4" y="-5.2" width="16.8" height="10.4" rx="5.2" fill="#7c6e58" opacity="0.55"/><rect x="-6.2" y="-3.0" width="12.4" height="6.0" rx="3.0" fill="#131313"/><path d="M-4.7,-2.2 L4.7,-2.2" stroke="#c4cfdc" stroke-width="1.4" stroke-linecap="round"/><path d="M-4.2,0.3 L4.2,0.3" stroke="#9aa4b0" stroke-width="0.8" opacity="0.8"/></g>
<g transform="translate(499.4,794.1) rotate(45.5) scale(0.98)"><rect x="-8.4" y="-5.2" width="16.8" height="10.4" rx="5.2" fill="#7c6e58" opacity="0.55"/><rect x="-6.2" y="-3.0" width="12.4" height="6.0" rx="3.0" fill="#131313"/><path d="M-4.7,-2.2 L4.7,-2.2" stroke="#c4cfdc" stroke-width="1.4" stroke-linecap="round"/><path d="M-4.2,0.3 L4.2,0.3" stroke="#9aa4b0" stroke-width="0.8" opacity="0.8"/></g>
<g transform="translate(511.6,784.7) rotate(46.0) scale(0.99)"><rect x="-8.4" y="-5.2" width="16.8" height="10.4" rx="5.2" fill="#7c6e58" opacity="0.55"/><rect x="-6.2" y="-3.0" width="12.4" height="6.0" rx="3.0" fill="#131313"/><path d="M-4.7,-2.2 L4.7,-2.2" stroke="#c4cfdc" stroke-width="1.4" stroke-linecap="round"/><path d="M-4.2,0.3 L4.2,0.3" stroke="#9aa4b0" stroke-width="0.8" opacity="0.8"/></g>
<g transform="translate(524.0,775.2) rotate(46.5) scale(1.00)"><rect x="-8.4" y="-5.2" width="16.8" height="10.4" rx="5.2" fill="#7c6e58" opacity="0.55"/><rect x="-6.2" y="-3.0" width="12.4" height="6.0" rx="3.0" fill="#131313"/><path d="M-4.7,-2.2 L4.7,-2.2" stroke="#c4cfdc" stroke-width="1.4" stroke-linecap="round"/><path d="M-4.2,0.3 L4.2,0.3" stroke="#9aa4b0" stroke-width="0.8" opacity="0.8"/></g>
<g transform="translate(536.4,765.7) rotate(46.9) scale(1.01)"><rect x="-8.4" y="-5.2" width="16.8" height="10.4" rx="5.2" fill="#7c6e58" opacity="0.55"/><rect x="-6.2" y="-3.0" width="12.4" height="6.0" rx="3.0" fill="#131313"/><path d="M-4.7,-2.2 L4.7,-2.2" stroke="#c4cfdc" stroke-width="1.4" stroke-linecap="round"/><path d="M-4.2,0.3 L4.2,0.3" stroke="#9aa4b0" stroke-width="0.8" opacity="0.8"/></g>
<g transform="translate(548.9,756.1) rotate(47.4) scale(1.02)"><rect x="-8.4" y="-5.2" width="16.8" height="10.4" rx="5.2" fill="#7c6e58" opacity="0.55"/><rect x="-6.2" y="-3.0" width="12.4" height="6.0" rx="3.0" fill="#131313"/><path d="M-4.7,-2.2 L4.7,-2.2" stroke="#c4cfdc" stroke-width="1.4" stroke-linecap="round"/><path d="M-4.2,0.3 L4.2,0.3" stroke="#9aa4b0" stroke-width="0.8" opacity="0.8"/></g>
<g transform="translate(561.4,746.4) rotate(47.9) scale(1.02)"><rect x="-8.4" y="-5.2" width="16.8" height="10.4" rx="5.2" fill="#7c6e58" opacity="0.55"/><rect x="-6.2" y="-3.0" width="12.4" height="6.0" rx="3.0" fill="#131313"/><path d="M-4.7,-2.2 L4.7,-2.2" stroke="#c4cfdc" stroke-width="1.4" stroke-linecap="round"/><path d="M-4.2,0.3 L4.2,0.3" stroke="#9aa4b0" stroke-width="0.8" opacity="0.8"/></g>
<g transform="translate(574.0,736.7) rotate(48.5) scale(1.03)"><rect x="-8.4" y="-5.2" width="16.8" height="10.4" rx="5.2" fill="#7c6e58" opacity="0.55"/><rect x="-6.2" y="-3.0" width="12.4" height="6.0" rx="3.0" fill="#131313"/><path d="M-4.7,-2.2 L4.7,-2.2" stroke="#c4cfdc" stroke-width="1.4" stroke-linecap="round"/><path d="M-4.2,0.3 L4.2,0.3" stroke="#9aa4b0" stroke-width="0.8" opacity="0.8"/></g>
<g transform="translate(586.7,727.0) rotate(49.0) scale(1.04)"><rect x="-8.4" y="-5.2" width="16.8" height="10.4" rx="5.2" fill="#7c6e58" opacity="0.55"/><rect x="-6.2" y="-3.0" width="12.4" height="6.0" rx="3.0" fill="#131313"/><path d="M-4.7,-2.2 L4.7,-2.2" stroke="#c4cfdc" stroke-width="1.4" stroke-linecap="round"/><path d="M-4.2,0.3 L4.2,0.3" stroke="#9aa4b0" stroke-width="0.8" opacity="0.8"/></g>
<g transform="translate(599.5,717.2) rotate(49.5) scale(1.05)"><rect x="-8.4" y="-5.2" width="16.8" height="10.4" rx="5.2" fill="#7c6e58" opacity="0.55"/><rect x="-6.2" y="-3.0" width="12.4" height="6.0" rx="3.0" fill="#131313"/><path d="M-4.7,-2.2 L4.7,-2.2" stroke="#c4cfdc" stroke-width="1.4" stroke-linecap="round"/><path d="M-4.2,0.3 L4.2,0.3" stroke="#9aa4b0" stroke-width="0.8" opacity="0.8"/></g>
<g transform="translate(612.3,707.3) rotate(50.0) scale(1.06)"><rect x="-8.4" y="-5.2" width="16.8" height="10.4" rx="5.2" fill="#7c6e58" opacity="0.55"/><rect x="-6.2" y="-3.0" width="12.4" height="6.0" rx="3.0" fill="#131313"/><path d="M-4.7,-2.2 L4.7,-2.2" stroke="#c4cfdc" stroke-width="1.4" stroke-linecap="round"/><path d="M-4.2,0.3 L4.2,0.3" stroke="#9aa4b0" stroke-width="0.8" opacity="0.8"/></g>
<g transform="translate(625.2,697.4) rotate(50.5) scale(1.07)"><rect x="-8.4" y="-5.2" width="16.8" height="10.4" rx="5.2" fill="#7c6e58" opacity="0.55"/><rect x="-6.2" y="-3.0" width="12.4" height="6.0" rx="3.0" fill="#131313"/><path d="M-4.7,-2.2 L4.7,-2.2" stroke="#c4cfdc" stroke-width="1.4" stroke-linecap="round"/><path d="M-4.2,0.3 L4.2,0.3" stroke="#9aa4b0" stroke-width="0.8" opacity="0.8"/></g>
<g transform="translate(638.1,687.4) rotate(51.0) scale(1.08)"><rect x="-8.4" y="-5.2" width="16.8" height="10.4" rx="5.2" fill="#7c6e58" opacity="0.55"/><rect x="-6.2" y="-3.0" width="12.4" height="6.0" rx="3.0" fill="#131313"/><path d="M-4.7,-2.2 L4.7,-2.2" stroke="#c4cfdc" stroke-width="1.4" stroke-linecap="round"/><path d="M-4.2,0.3 L4.2,0.3" stroke="#9aa4b0" stroke-width="0.8" opacity="0.8"/></g>
<g transform="translate(651.2,677.4) rotate(51.5) scale(1.09)"><rect x="-8.4" y="-5.2" width="16.8" height="10.4" rx="5.2" fill="#7c6e58" opacity="0.55"/><rect x="-6.2" y="-3.0" width="12.4" height="6.0" rx="3.0" fill="#131313"/><path d="M-4.7,-2.2 L4.7,-2.2" stroke="#c4cfdc" stroke-width="1.4" stroke-linecap="round"/><path d="M-4.2,0.3 L4.2,0.3" stroke="#9aa4b0" stroke-width="0.8" opacity="0.8"/></g>
<circle cx="664.3" cy="667.3" r="2.2" fill="#1c1c1c"/><circle cx="663.7" cy="666.5" r="1" fill="#c8d2de"/>
<circle cx="677.5" cy="657.2" r="2.2" fill="#1c1c1c"/><circle cx="676.9" cy="656.4" r="1" fill="#c8d2de"/>
<g transform="translate(690.7,647.0) rotate(53.1) scale(1.11)"><rect x="-8.4" y="-5.2" width="16.8" height="10.4" rx="5.2" fill="#7c6e58" opacity="0.55"/><rect x="-6.2" y="-3.0" width="12.4" height="6.0" rx="3.0" fill="#131313"/><path d="M-4.7,-2.2 L4.7,-2.2" stroke="#c4cfdc" stroke-width="1.4" stroke-linecap="round"/><path d="M-4.2,0.3 L4.2,0.3" stroke="#9aa4b0" stroke-width="0.8" opacity="0.8"/></g>
<g transform="translate(704.0,636.8) rotate(53.6) scale(1.12)"><rect x="-8.4" y="-5.2" width="16.8" height="10.4" rx="5.2" fill="#7c6e58" opacity="0.55"/><rect x="-6.2" y="-3.0" width="12.4" height="6.0" rx="3.0" fill="#131313"/><path d="M-4.7,-2.2 L4.7,-2.2" stroke="#c4cfdc" stroke-width="1.4" stroke-linecap="round"/><path d="M-4.2,0.3 L4.2,0.3" stroke="#9aa4b0" stroke-width="0.8" opacity="0.8"/></g>
<g transform="translate(717.4,626.5) rotate(54.2) scale(1.13)"><rect x="-8.4" y="-5.2" width="16.8" height="10.4" rx="5.2" fill="#7c6e58" opacity="0.55"/><rect x="-6.2" y="-3.0" width="12.4" height="6.0" rx="3.0" fill="#131313"/><path d="M-4.7,-2.2 L4.7,-2.2" stroke="#c4cfdc" stroke-width="1.4" stroke-linecap="round"/><path d="M-4.2,0.3 L4.2,0.3" stroke="#9aa4b0" stroke-width="0.8" opacity="0.8"/></g>
<g transform="translate(730.8,616.2) rotate(54.7) scale(1.14)"><rect x="-8.4" y="-5.2" width="16.8" height="10.4" rx="5.2" fill="#7c6e58" opacity="0.55"/><rect x="-6.2" y="-3.0" width="12.4" height="6.0" rx="3.0" fill="#131313"/><path d="M-4.7,-2.2 L4.7,-2.2" stroke="#c4cfdc" stroke-width="1.4" stroke-linecap="round"/><path d="M-4.2,0.3 L4.2,0.3" stroke="#9aa4b0" stroke-width="0.8" opacity="0.8"/></g>
<g transform="translate(744.4,605.8) rotate(55.3) scale(1.15)"><rect x="-8.4" y="-5.2" width="16.8" height="10.4" rx="5.2" fill="#7c6e58" opacity="0.55"/><rect x="-6.2" y="-3.0" width="12.4" height="6.0" rx="3.0" fill="#131313"/><path d="M-4.7,-2.2 L4.7,-2.2" stroke="#c4cfdc" stroke-width="1.4" stroke-linecap="round"/><path d="M-4.2,0.3 L4.2,0.3" stroke="#9aa4b0" stroke-width="0.8" opacity="0.8"/></g>
<g transform="translate(757.9,595.3) rotate(55.8) scale(1.16)"><rect x="-8.4" y="-5.2" width="16.8" height="10.4" rx="5.2" fill="#7c6e58" opacity="0.55"/><rect x="-6.2" y="-3.0" width="12.4" height="6.0" rx="3.0" fill="#131313"/><path d="M-4.7,-2.2 L4.7,-2.2" stroke="#c4cfdc" stroke-width="1.4" stroke-linecap="round"/><path d="M-4.2,0.3 L4.2,0.3" stroke="#9aa4b0" stroke-width="0.8" opacity="0.8"/></g>
<g transform="translate(771.6,584.8) rotate(56.3) scale(1.17)"><rect x="-8.4" y="-5.2" width="16.8" height="10.4" rx="5.2" fill="#7c6e58" opacity="0.55"/><rect x="-6.2" y="-3.0" width="12.4" height="6.0" rx="3.0" fill="#131313"/><path d="M-4.7,-2.2 L4.7,-2.2" stroke="#c4cfdc" stroke-width="1.4" stroke-linecap="round"/><path d="M-4.2,0.3 L4.2,0.3" stroke="#9aa4b0" stroke-width="0.8" opacity="0.8"/></g>
<g transform="translate(785.3,574.3) rotate(56.9) scale(1.18)"><rect x="-8.4" y="-5.2" width="16.8" height="10.4" rx="5.2" fill="#7c6e58" opacity="0.55"/><rect x="-6.2" y="-3.0" width="12.4" height="6.0" rx="3.0" fill="#131313"/><path d="M-4.7,-2.2 L4.7,-2.2" stroke="#c4cfdc" stroke-width="1.4" stroke-linecap="round"/><path d="M-4.2,0.3 L4.2,0.3" stroke="#9aa4b0" stroke-width="0.8" opacity="0.8"/></g>
<g transform="translate(799.1,563.7) rotate(57.4) scale(1.19)"><rect x="-8.4" y="-5.2" width="16.8" height="10.4" rx="5.2" fill="#7c6e58" opacity="0.55"/><rect x="-6.2" y="-3.0" width="12.4" height="6.0" rx="3.0" fill="#131313"/><path d="M-4.7,-2.2 L4.7,-2.2" stroke="#c4cfdc" stroke-width="1.4" stroke-linecap="round"/><path d="M-4.2,0.3 L4.2,0.3" stroke="#9aa4b0" stroke-width="0.8" opacity="0.8"/></g>
<g transform="translate(813.0,553.0) rotate(58.0) scale(1.20)"><rect x="-8.4" y="-5.2" width="16.8" height="10.4" rx="5.2" fill="#7c6e58" opacity="0.55"/><rect x="-6.2" y="-3.0" width="12.4" height="6.0" rx="3.0" fill="#131313"/><path d="M-4.7,-2.2 L4.7,-2.2" stroke="#c4cfdc" stroke-width="1.4" stroke-linecap="round"/><path d="M-4.2,0.3 L4.2,0.3" stroke="#9aa4b0" stroke-width="0.8" opacity="0.8"/></g>
<circle cx="795.3" cy="200.4" r="14.2" fill="#e8e0d0" opacity="0.35"/><circle cx="795.3" cy="200.4" r="13" fill="#1d1b18"/><circle cx="795.3" cy="200.4" r="10.7" fill="none" stroke="#6e675c" stroke-width="1.6" opacity="0.8"/><path d="M788.1,196.5 L802.4,204.3 M788.1,204.3 L802.4,196.5" stroke="#a8a49e" stroke-width="1.8"/><path d="M786.2,193.9 A11.0,11.0 0 0 1 800.5,190.0" fill="none" stroke="#9fb2c8" stroke-width="1.6" opacity="0.7"/>
<circle cx="795" cy="526" r="13.2" fill="#e8e0d0" opacity="0.35"/><circle cx="795" cy="526" r="12" fill="#1d1b18"/><circle cx="795" cy="526" r="9.8" fill="none" stroke="#6e675c" stroke-width="1.4" opacity="0.8"/><path d="M788.4,522.4 L801.6,529.6 M788.4,529.6 L801.6,522.4" stroke="#a8a49e" stroke-width="1.7"/><path d="M786.6,520.0 A10.2,10.2 0 0 1 799.8,516.4" fill="none" stroke="#9fb2c8" stroke-width="1.4" opacity="0.7"/>
<circle cx="240" cy="730" r="12.7" fill="#e8e0d0" opacity="0.35"/><circle cx="240" cy="730" r="11.5" fill="#1d1b18"/><circle cx="240" cy="730" r="9.4" fill="none" stroke="#6e675c" stroke-width="1.4" opacity="0.8"/><path d="M233.7,726.5 L246.3,733.5 M233.7,733.5 L246.3,726.5" stroke="#a8a49e" stroke-width="1.6"/><path d="M231.9,724.2 A9.8,9.8 0 0 1 244.6,720.8" fill="none" stroke="#9fb2c8" stroke-width="1.4" opacity="0.7"/>
<circle cx="281" cy="967" r="12.0" fill="#e8e0d0" opacity="0.35"/><circle cx="281" cy="967" r="10.8" fill="#1d1b18"/><circle cx="281" cy="967" r="8.9" fill="none" stroke="#6e675c" stroke-width="1.3" opacity="0.8"/><path d="M275.1,963.8 L286.9,970.2 M275.1,970.2 L286.9,963.8" stroke="#a8a49e" stroke-width="1.5"/><path d="M273.4,961.6 A9.2,9.2 0 0 1 285.3,958.4" fill="none" stroke="#9fb2c8" stroke-width="1.3" opacity="0.7"/>
<polygon points="411.5,915.9 796.1,624.4 823.1,664.0 823.1,673.0 395.7,982.5" fill="url(#slantG)"/>
<polygon points="395.7,982.5 823.1,673.0 823.1,958.6" fill="url(#frontG)"/>
<polyline points="397.0,981.5 823.1,673.0" stroke="#bfae8e" stroke-width="1.6" fill="none" opacity="0.8"/>
<polygon points="700.0,770.0 740.0,745.0 790.0,735.0 822.0,720.0 822.0,800.0 790.0,812.0 760.0,800.0 735.0,820.0 705.0,812.0" fill="#c8c0b0" opacity="0.45"/>
<polygon points="823.0,740.0 860.0,735.0 912.0,738.0 912.0,790.0 880.0,800.0 850.0,790.0 823.0,800.0" fill="#d0c8b8" opacity="0.4"/>
<polygon points="823.0,679.7 881.6,676.6 916.2,720.2 823.0,730.6" fill="#8e7d62"/>
<polygon points="823.0,730.6 916.0,724.7 915.3,952.0 823.0,958.6" fill="url(#boxG)"/>
<polyline points="823.0,728.6 916.0,722.7" stroke="#7d9bc4" stroke-width="2" fill="none"/>
<polygon points="546.3,975.3 826.5,958.0 828.2,1105.2 559.4,1121.6" fill="#9b8c76"/>
<polyline points="546.3,975.3 559.4,1121.6" stroke="#c9b590" stroke-width="1.6" fill="none"/>
<polygon points="549.6,973.7 825.7,958.9 825.7,994.2 549.6,1014.8" fill="url(#weldG)"/>
<path d="M552.0,975.4 Q563.0,987.7 559.0,1011.3" fill="none" stroke="#2e2a24" stroke-width="2.4" opacity="0.55"/>
<path d="M556.0,976.4 Q564.0,982.4 564.0,991.8" fill="none" stroke="#e8f0fa" stroke-width="3.2" opacity="0.75" stroke-linecap="round"/>
<path d="M564.0,974.7 Q575.0,987.0 571.0,1010.4" fill="none" stroke="#2e2a24" stroke-width="2.4" opacity="0.55"/>
<path d="M568.0,975.7 Q576.0,981.7 576.0,991.0" fill="none" stroke="#e8f0fa" stroke-width="3.2" opacity="0.75" stroke-linecap="round"/>
<path d="M577.1,974.0 Q588.1,986.2 584.1,1009.4" fill="none" stroke="#2e2a24" stroke-width="2.4" opacity="0.55"/>
<path d="M581.1,975.0 Q589.1,980.9 589.1,990.2" fill="none" stroke="#e8f0fa" stroke-width="3.2" opacity="0.75" stroke-linecap="round"/>
<path d="M589.6,973.3 Q600.6,985.4 596.6,1008.5" fill="none" stroke="#2e2a24" stroke-width="2.4" opacity="0.55"/>
<path d="M593.6,974.3 Q601.6,980.2 601.6,989.4" fill="none" stroke="#e8f0fa" stroke-width="3.2" opacity="0.75" stroke-linecap="round"/>
<path d="M603.0,972.6 Q614.0,984.6 610.0,1007.5" fill="none" stroke="#2e2a24" stroke-width="2.4" opacity="0.55"/>
<path d="M607.0,973.6 Q615.0,979.4 615.0,988.6" fill="none" stroke="#e8f0fa" stroke-width="3.2" opacity="0.75" stroke-linecap="round"/>
<path d="M616.5,971.9 Q627.5,983.8 623.5,1006.5" fill="none" stroke="#2e2a24" stroke-width="2.4" opacity="0.55"/>
<path d="M620.5,972.9 Q628.5,978.6 628.5,987.7" fill="none" stroke="#e8f0fa" stroke-width="3.2" opacity="0.75" stroke-linecap="round"/>
<path d="M627.8,971.3 Q638.8,983.1 634.8,1005.7" fill="none" stroke="#2e2a24" stroke-width="2.4" opacity="0.55"/>
<path d="M631.8,972.3 Q639.8,978.0 639.8,987.0" fill="none" stroke="#e8f0fa" stroke-width="3.2" opacity="0.75" stroke-linecap="round"/>
<path d="M638.8,970.7 Q649.8,982.4 645.8,1004.8" fill="none" stroke="#2e2a24" stroke-width="2.4" opacity="0.55"/>
<path d="M642.8,971.7 Q650.8,977.3 650.8,986.3" fill="none" stroke="#e8f0fa" stroke-width="3.2" opacity="0.75" stroke-linecap="round"/>
<path d="M653.2,969.9 Q664.2,981.5 660.2,1003.8" fill="none" stroke="#2e2a24" stroke-width="2.4" opacity="0.55"/>
<path d="M657.2,970.9 Q665.2,976.5 665.2,985.4" fill="none" stroke="#e8f0fa" stroke-width="3.2" opacity="0.75" stroke-linecap="round"/>
<path d="M665.2,969.3 Q676.2,980.8 672.2,1002.9" fill="none" stroke="#2e2a24" stroke-width="2.4" opacity="0.55"/>
<path d="M669.2,970.3 Q677.2,975.8 677.2,984.7" fill="none" stroke="#e8f0fa" stroke-width="3.2" opacity="0.75" stroke-linecap="round"/>
<path d="M677.2,968.6 Q688.2,980.1 684.2,1002.0" fill="none" stroke="#2e2a24" stroke-width="2.4" opacity="0.55"/>
<path d="M681.2,969.6 Q689.2,975.1 689.2,983.9" fill="none" stroke="#e8f0fa" stroke-width="3.2" opacity="0.75" stroke-linecap="round"/>
<path d="M692.1,967.8 Q703.1,979.2 699.1,1000.9" fill="none" stroke="#2e2a24" stroke-width="2.4" opacity="0.55"/>
<path d="M696.1,968.8 Q704.1,974.2 704.1,983.0" fill="none" stroke="#e8f0fa" stroke-width="3.2" opacity="0.75" stroke-linecap="round"/>
<path d="M705.0,967.2 Q716.0,978.4 712.0,999.9" fill="none" stroke="#2e2a24" stroke-width="2.4" opacity="0.55"/>
<path d="M709.0,968.2 Q717.0,973.5 717.0,982.1" fill="none" stroke="#e8f0fa" stroke-width="3.2" opacity="0.75" stroke-linecap="round"/>
<path d="M719.4,966.4 Q730.4,977.5 726.4,998.8" fill="none" stroke="#2e2a24" stroke-width="2.4" opacity="0.55"/>
<path d="M723.4,967.4 Q731.4,972.6 731.4,981.2" fill="none" stroke="#e8f0fa" stroke-width="3.2" opacity="0.75" stroke-linecap="round"/>
<path d="M732.3,965.7 Q743.3,976.7 739.3,997.9" fill="none" stroke="#2e2a24" stroke-width="2.4" opacity="0.55"/>
<path d="M736.3,966.7 Q744.3,971.9 744.3,980.4" fill="none" stroke="#e8f0fa" stroke-width="3.2" opacity="0.75" stroke-linecap="round"/>
<path d="M745.8,965.0 Q756.8,975.9 752.8,996.9" fill="none" stroke="#2e2a24" stroke-width="2.4" opacity="0.55"/>
<path d="M749.8,966.0 Q757.8,971.1 757.8,979.6" fill="none" stroke="#e8f0fa" stroke-width="3.2" opacity="0.75" stroke-linecap="round"/>
<path d="M757.4,964.3 Q768.4,975.2 764.4,996.0" fill="none" stroke="#2e2a24" stroke-width="2.4" opacity="0.55"/>
<path d="M761.4,965.3 Q769.4,970.4 769.4,978.8" fill="none" stroke="#e8f0fa" stroke-width="3.2" opacity="0.75" stroke-linecap="round"/>
<path d="M771.0,963.6 Q782.0,974.3 778.0,995.0" fill="none" stroke="#2e2a24" stroke-width="2.4" opacity="0.55"/>
<path d="M775.0,964.6 Q783.0,969.6 783.0,978.0" fill="none" stroke="#e8f0fa" stroke-width="3.2" opacity="0.75" stroke-linecap="round"/>
<path d="M785.5,962.8 Q796.5,973.5 792.5,993.9" fill="none" stroke="#2e2a24" stroke-width="2.4" opacity="0.55"/>
<path d="M789.5,963.8 Q797.5,968.8 797.5,977.1" fill="none" stroke="#e8f0fa" stroke-width="3.2" opacity="0.75" stroke-linecap="round"/>
<path d="M798.5,962.1 Q809.5,972.7 805.5,992.9" fill="none" stroke="#2e2a24" stroke-width="2.4" opacity="0.55"/>
<path d="M802.5,963.1 Q810.5,968.0 810.5,976.2" fill="none" stroke="#e8f0fa" stroke-width="3.2" opacity="0.75" stroke-linecap="round"/>
<path d="M812.5,961.4 Q823.5,971.8 819.5,991.9" fill="none" stroke="#2e2a24" stroke-width="2.4" opacity="0.55"/>
<path d="M816.5,962.4 Q824.5,967.2 824.5,975.4" fill="none" stroke="#e8f0fa" stroke-width="3.2" opacity="0.75" stroke-linecap="round"/>
<circle cx="562" cy="990" r="3" fill="#1e1c18" opacity="0.7"/>
<circle cx="598" cy="1000" r="3" fill="#1e1c18" opacity="0.7"/>
<circle cx="610" cy="985" r="3" fill="#1e1c18" opacity="0.7"/>
<circle cx="660" cy="995" r="3" fill="#1e1c18" opacity="0.7"/>
<circle cx="700" cy="975" r="3" fill="#1e1c18" opacity="0.7"/>
<circle cx="456" cy="962.4" r="9.7" fill="#e8e0d0" opacity="0.35"/><circle cx="456" cy="962.4" r="8.5" fill="#1d1b18"/><circle cx="456" cy="962.4" r="7.0" fill="none" stroke="#6e675c" stroke-width="1.0" opacity="0.8"/><path d="M451.3,959.9 L460.7,964.9 M451.3,964.9 L460.7,959.9" stroke="#a8a49e" stroke-width="1.2"/><path d="M450.1,958.1 A7.2,7.2 0 0 1 459.4,955.6" fill="none" stroke="#9fb2c8" stroke-width="1.0" opacity="0.7"/>
<circle cx="891.2" cy="930.4" r="9.7" fill="#e8e0d0" opacity="0.35"/><circle cx="891.2" cy="930.4" r="8.5" fill="#1d1b18"/><circle cx="891.2" cy="930.4" r="7.0" fill="none" stroke="#6e675c" stroke-width="1.0" opacity="0.8"/><path d="M886.5,927.9 L895.9,932.9 M886.5,932.9 L895.9,927.9" stroke="#a8a49e" stroke-width="1.2"/><path d="M885.2,926.1 A7.2,7.2 0 0 1 894.6,923.6" fill="none" stroke="#9fb2c8" stroke-width="1.0" opacity="0.7"/>
<circle cx="806.4" cy="704.8" r="7.2" fill="#e8e0d0" opacity="0.35"/><circle cx="806.4" cy="704.8" r="6" fill="#1d1b18"/><circle cx="806.4" cy="704.8" r="4.9" fill="none" stroke="#6e675c" stroke-width="0.7" opacity="0.8"/><path d="M803.1,703.0 L809.7,706.6 M803.1,706.6 L809.7,703.0" stroke="#a8a49e" stroke-width="0.8"/><path d="M802.2,701.8 A5.1,5.1 0 0 1 808.8,700.0" fill="none" stroke="#9fb2c8" stroke-width="0.7" opacity="0.7"/>
<circle cx="825.6" cy="751" r="7.2" fill="#e8e0d0" opacity="0.35"/><circle cx="825.6" cy="751" r="6" fill="#1d1b18"/><circle cx="825.6" cy="751" r="4.9" fill="none" stroke="#6e675c" stroke-width="0.7" opacity="0.8"/><path d="M822.3,749.2 L828.9,752.8 M822.3,752.8 L828.9,749.2" stroke="#a8a49e" stroke-width="0.8"/><path d="M821.4,748.0 A5.1,5.1 0 0 1 828.0,746.2" fill="none" stroke="#9fb2c8" stroke-width="0.7" opacity="0.7"/>
<circle cx="836.8" cy="744.8" r="6.7" fill="#e8e0d0" opacity="0.35"/><circle cx="836.8" cy="744.8" r="5.5" fill="#1d1b18"/><circle cx="836.8" cy="744.8" r="4.5" fill="none" stroke="#6e675c" stroke-width="0.7" opacity="0.8"/><path d="M833.8,743.1 L839.8,746.4 M833.8,746.4 L839.8,743.1" stroke="#a8a49e" stroke-width="0.8"/><path d="M832.9,742.0 A4.7,4.7 0 0 1 839.0,740.4" fill="none" stroke="#9fb2c8" stroke-width="0.7" opacity="0.7"/>
</g>
<line x1="1071.2" y1="1109.3" x2="1095.7" y2="1108" stroke="#f08080" stroke-width="1.8"/>
<line x1="1071.2" y1="1109.3" x2="1071.2" y2="1120.5" stroke="#70e070" stroke-width="1.8"/>
<line x1="1072" y1="1120.5" x2="1072.5" y2="1130.5" stroke="#7f7ff8" stroke-width="1.6"/>
<path d="M1095,1103 L1102,1113 M1102,1103 L1095,1113" stroke="#e8e8e8" stroke-width="1"/>
<path d="M1072.5,1113 L1076.5,1120 L1080.5,1113 M1076.5,1120 L1076.5,1128.5" stroke="#e8e8e8" stroke-width="1" fill="none"/>
<path d="M1071,1128.5 L1076.5,1128.5 L1071,1137.5 L1077,1137.5" stroke="#e8e8e8" stroke-width="1" fill="none"/>
<rect x="790.8" y="136.8" width="298" height="38.6" rx="1.5" fill="#1c1c1c" fill-opacity="0.7" stroke="#525252" stroke-width="1.8"/>
<text x="805" y="164" font-size="22" fill="#d4d4d4" stroke="#d4d4d4" stroke-width="0.3" opacity="0.999" textLength="83" lengthAdjust="spacingAndGlyphs">Material</text>
<polyline points="1065,151.5 1073.5,160 1082,151.5" fill="none" stroke="#d8d8d8" stroke-width="1.7"/>
</svg>
</body></html>
